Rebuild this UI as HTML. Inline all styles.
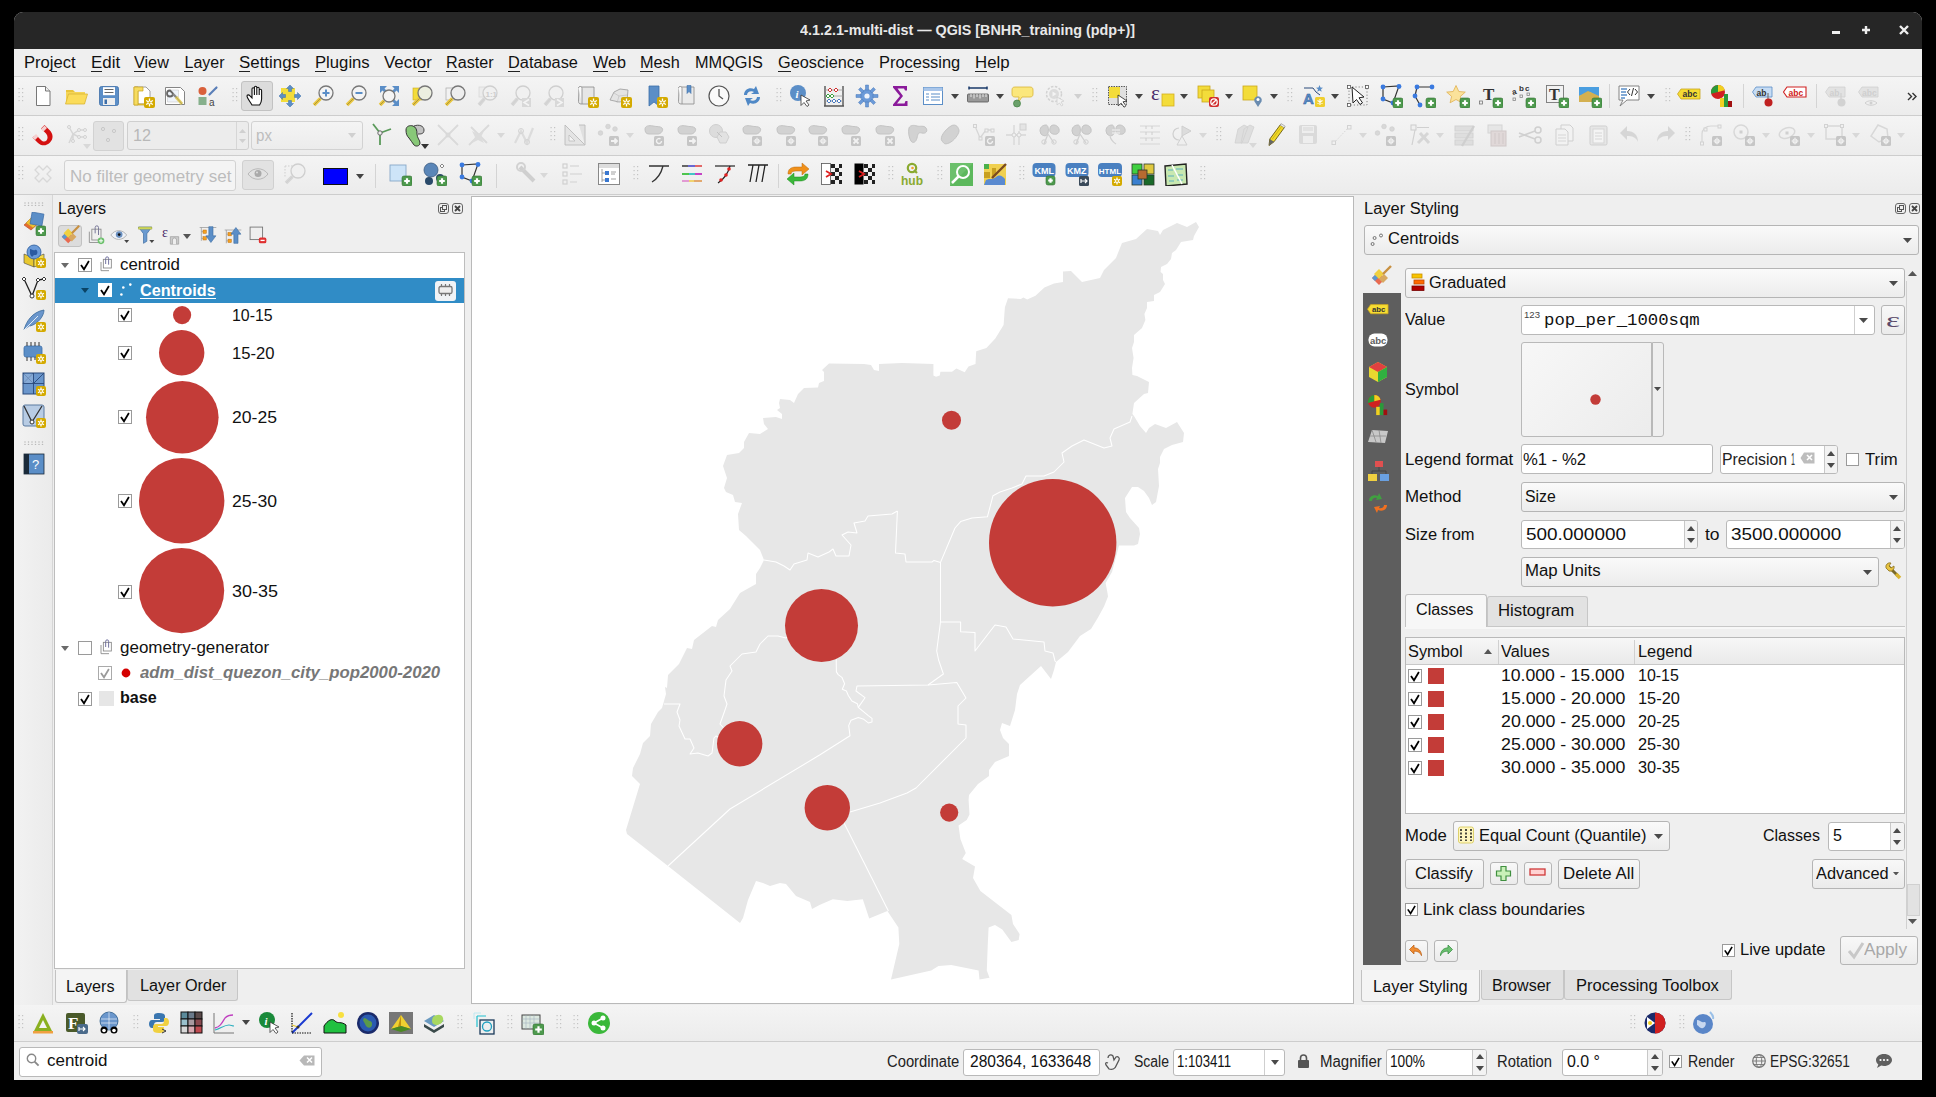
<!DOCTYPE html><html><head><meta charset="utf-8"><style>
html,body{margin:0;padding:0;}
body{width:1936px;height:1097px;background:#000;position:relative;overflow:hidden;font-family:"Liberation Sans",sans-serif;}
body>div,body>svg{position:absolute;}
.t{white-space:nowrap;}
</style></head><body>
<div style="left:14px;top:12px;width:1908px;height:1068px;background:#efefef;border-radius:9px 9px 0 0;overflow:hidden"></div>
<div style="left:14px;top:12px;width:1908px;height:37px;background:#262626;border-radius:9px 9px 0 0"></div>
<div class="t" style="left:800.0px;top:21.8px;font-size:15px;line-height:15px;color:#e8e8e8;font-weight:bold;font-style:normal;font-family:'Liberation Sans';transform:scaleX(0.9561);transform-origin:0 0;">4.1.2.1-multi-dist — QGIS [BNHR_training (pdp+)]</div>
<svg style="left:1826px;top:20px;" width="100" height="22" viewBox="0 0 100 22"><rect x="6" y="11" width="8" height="3" fill="#eee"/><path d="M40 6v8M36 10h8" stroke="#eee" stroke-width="2.4"/><path d="M74 6l8 8M82 6l-8 8" stroke="#eee" stroke-width="2.4"/></svg>
<div style="left:14px;top:49px;width:1908px;height:27px;background:#efefef"></div>
<div style="left:14px;top:76px;width:1908px;height:1px;background:#d2d2d2"></div>
<div class="t" style="left:24.3px;top:55.0px;font-size:16px;line-height:16px;color:#111;font-weight:normal;font-style:normal;font-family:'Liberation Sans';transform:scaleX(1.0390);transform-origin:0 0;">Project</div>
<div style="left:51px;top:71px;width:6px;height:1px;background:#222"></div>
<div class="t" style="left:90.7px;top:55.0px;font-size:16px;line-height:16px;color:#111;font-weight:normal;font-style:normal;font-family:'Liberation Sans';transform:scaleX(1.0549);transform-origin:0 0;">Edit</div>
<div style="left:91px;top:71px;width:11px;height:1px;background:#222"></div>
<div class="t" style="left:134.0px;top:55.0px;font-size:16px;line-height:16px;color:#111;font-weight:normal;font-style:normal;font-family:'Liberation Sans';transform:scaleX(1.0127);transform-origin:0 0;">View</div>
<div style="left:134px;top:71px;width:11px;height:1px;background:#222"></div>
<div class="t" style="left:184.5px;top:55.0px;font-size:16px;line-height:16px;color:#111;font-weight:normal;font-style:normal;font-family:'Liberation Sans';transform:scaleX(1.0000);transform-origin:0 0;">Layer</div>
<div style="left:184px;top:71px;width:9px;height:1px;background:#222"></div>
<div class="t" style="left:239.2px;top:55.0px;font-size:16px;line-height:16px;color:#111;font-weight:normal;font-style:normal;font-family:'Liberation Sans';transform:scaleX(1.0561);transform-origin:0 0;">Settings</div>
<div style="left:239px;top:71px;width:11px;height:1px;background:#222"></div>
<div class="t" style="left:314.9px;top:55.0px;font-size:16px;line-height:16px;color:#111;font-weight:normal;font-style:normal;font-family:'Liberation Sans';transform:scaleX(1.0423);transform-origin:0 0;">Plugins</div>
<div style="left:315px;top:71px;width:11px;height:1px;background:#222"></div>
<div class="t" style="left:383.8px;top:55.0px;font-size:16px;line-height:16px;color:#111;font-weight:normal;font-style:normal;font-family:'Liberation Sans';transform:scaleX(1.0557);transform-origin:0 0;">Vector</div>
<div style="left:418px;top:71px;width:9px;height:1px;background:#222"></div>
<div class="t" style="left:446.0px;top:55.0px;font-size:16px;line-height:16px;color:#111;font-weight:normal;font-style:normal;font-family:'Liberation Sans';transform:scaleX(1.0085);transform-origin:0 0;">Raster</div>
<div style="left:446px;top:71px;width:12px;height:1px;background:#222"></div>
<div class="t" style="left:508.0px;top:55.0px;font-size:16px;line-height:16px;color:#111;font-weight:normal;font-style:normal;font-family:'Liberation Sans';transform:scaleX(1.0207);transform-origin:0 0;">Database</div>
<div style="left:508px;top:71px;width:12px;height:1px;background:#222"></div>
<div class="t" style="left:592.7px;top:55.0px;font-size:16px;line-height:16px;color:#111;font-weight:normal;font-style:normal;font-family:'Liberation Sans';transform:scaleX(1.0110);transform-origin:0 0;">Web</div>
<div style="left:593px;top:71px;width:15px;height:1px;background:#222"></div>
<div class="t" style="left:640.2px;top:55.0px;font-size:16px;line-height:16px;color:#111;font-weight:normal;font-style:normal;font-family:'Liberation Sans';transform:scaleX(1.0153);transform-origin:0 0;">Mesh</div>
<div style="left:640px;top:71px;width:13px;height:1px;background:#222"></div>
<div class="t" style="left:695.3px;top:55.0px;font-size:16px;line-height:16px;color:#111;font-weight:normal;font-style:normal;font-family:'Liberation Sans';transform:scaleX(1.0177);transform-origin:0 0;">MMQGIS</div>
<div class="t" style="left:778.0px;top:55.0px;font-size:16px;line-height:16px;color:#111;font-weight:normal;font-style:normal;font-family:'Liberation Sans';transform:scaleX(1.0180);transform-origin:0 0;">Geoscience</div>
<div style="left:778px;top:71px;width:13px;height:1px;background:#222"></div>
<div class="t" style="left:878.7px;top:55.0px;font-size:16px;line-height:16px;color:#111;font-weight:normal;font-style:normal;font-family:'Liberation Sans';transform:scaleX(1.0265);transform-origin:0 0;">Processing</div>
<div style="left:905px;top:71px;width:8px;height:1px;background:#222"></div>
<div class="t" style="left:974.9px;top:55.0px;font-size:16px;line-height:16px;color:#111;font-weight:normal;font-style:normal;font-family:'Liberation Sans';transform:scaleX(1.0498);transform-origin:0 0;">Help</div>
<div style="left:975px;top:71px;width:12px;height:1px;background:#222"></div>
<div style="left:14px;top:77px;width:1908px;height:38px;background:linear-gradient(#f4f4f4,#ececec)"></div>
<div style="left:14px;top:115px;width:1908px;height:1px;background:#cdcdcd"></div>
<div style="left:14px;top:116px;width:1908px;height:39px;background:linear-gradient(#f4f4f4,#ececec)"></div>
<div style="left:14px;top:155px;width:1908px;height:1px;background:#cdcdcd"></div>
<div style="left:14px;top:156px;width:1908px;height:38px;background:linear-gradient(#f4f4f4,#ececec)"></div>
<div style="left:14px;top:194px;width:1908px;height:1px;background:#cdcdcd"></div>
<div style="left:14px;top:195px;width:1908px;height:810px;background:#efefef"></div>
<div style="left:14px;top:195px;width:38px;height:810px;background:linear-gradient(90deg,#f2f2f2,#ebebeb)"></div>
<div style="left:52px;top:195px;width:1px;height:810px;background:#d6d6d6"></div>
<div class="t" style="left:58.0px;top:200.5px;font-size:16px;line-height:16px;color:#111;font-weight:normal;font-style:normal;font-family:'Liberation Sans';transform:scaleX(1.0000);transform-origin:0 0;">Layers</div>
<div style="left:438px;top:203px;width:11px;height:11px;border:1px solid #666;border-radius:3px;box-sizing:border-box"></div>
<div style="left:452px;top:203px;width:11px;height:11px;border:1px solid #666;border-radius:3px;box-sizing:border-box"></div>
<svg style="left:438px;top:203px;" width="26" height="11" viewBox="0 0 26 11"><rect x="2.5" y="4.5" width="4" height="4" fill="none" stroke="#555" stroke-width="1"/><rect x="4.5" y="2.5" width="4" height="4" fill="#efefef" stroke="#555" stroke-width="1"/><path d="M17 3l5 5M22 3l-5 5" stroke="#444" stroke-width="1.8"/></svg>
<div style="left:54px;top:252px;width:411px;height:717px;background:#fff;border:1px solid #bdbdbd;box-sizing:border-box"></div>
<div style="left:55px;top:278px;width:409px;height:25px;background:#308cc6"></div>
<div style="left:471px;top:196px;width:883px;height:808px;background:#fff;border:1px solid #b9b9b9;box-sizing:border-box"></div>
<div class="t" style="left:1364.0px;top:201.3px;font-size:16px;line-height:16px;color:#111;font-weight:normal;font-style:normal;font-family:'Liberation Sans';transform:scaleX(1.0272);transform-origin:0 0;">Layer Styling</div>
<div style="left:14px;top:1005px;width:1908px;height:36px;background:linear-gradient(#f4f4f4,#ececec)"></div>
<div style="left:14px;top:1041px;width:1908px;height:1px;background:#cdcdcd"></div>
<div style="left:14px;top:1042px;width:1908px;height:38px;background:#efefef"></div>
<div style="left:58px;top:225px;width:24px;height:22px;background:#dcdcdc;border:1px solid #c2c2c2;border-radius:3px;box-sizing:border-box"></div>
<svg style="left:61.0px;top:262.7px;" width="8" height="5" viewBox="0 0 8 5"><path d="M0 0H8L4.0 5Z" fill="#6a6a6a"/></svg>
<svg style="left:78px;top:258px;" width="14" height="14" viewBox="0 0 14 14"><rect x="0.5" y="0.5" width="13" height="13" fill="#fff" stroke="#9a9a9a"/><path d="M3.0 6.9 L6.0 11.3 L10.9 3.0" fill="none" stroke="#000" stroke-width="1.75" stroke-linejoin="miter"/></svg>
<div class="t" style="left:120.0px;top:257.1px;font-size:16px;line-height:16px;color:#111;font-weight:normal;font-style:normal;font-family:'Liberation Sans';transform:scaleX(1.0534);transform-origin:0 0;">centroid</div>
<svg style="left:81.0px;top:288.0px;" width="8" height="5" viewBox="0 0 8 5"><path d="M0 0H8L4.0 5Z" fill="#0b4466"/></svg>
<svg style="left:98px;top:283px;" width="14" height="14" viewBox="0 0 14 14"><rect x="0.5" y="0.5" width="13" height="13" fill="#fff" stroke="#fff"/><path d="M3.0 6.9 L6.0 11.3 L10.9 3.0" fill="none" stroke="#000" stroke-width="1.75" stroke-linejoin="miter"/></svg>
<svg style="left:118px;top:282px;" width="16" height="16" viewBox="0 0 16 16"><circle cx="3.4" cy="12.5" r="1.3" fill="#fff"/><circle cx="5.3" cy="5.5" r="1.3" fill="#fff"/><circle cx="12.3" cy="2.6" r="1.3" fill="#fff"/></svg>
<div class="t" style="left:140.0px;top:282.5px;font-size:16px;line-height:16px;color:#fff;font-weight:bold;font-style:normal;font-family:'Liberation Sans';transform:scaleX(1.0131);transform-origin:0 0;">Centroids</div>
<div style="left:140px;top:298px;width:76px;height:1px;background:#fff"></div>
<div style="left:435px;top:280.5px;width:21px;height:20px;background:#f0f3f6;border-radius:3px"></div>
<svg style="left:437px;top:283px;" width="17" height="14" viewBox="0 0 17 14"><rect x="2" y="3.5" width="13" height="7" rx="1.5" fill="#eee" stroke="#777" stroke-width="1.3"/><path d="M4.5 1v2.5M8.5 1v2.5M12.5 1v2.5M4.5 10.5v2.5M8.5 10.5v2.5M12.5 10.5v2.5" stroke="#777" stroke-width="1.2"/></svg>
<svg style="left:118px;top:308px;" width="14" height="14" viewBox="0 0 14 14"><rect x="0.5" y="0.5" width="13" height="13" fill="#fff" stroke="#9a9a9a"/><path d="M3.0 6.9 L6.0 11.3 L10.9 3.0" fill="none" stroke="#000" stroke-width="1.75" stroke-linejoin="miter"/></svg>
<svg style="left:171.8px;top:304.59999999999997px;" width="20.2" height="20.2" viewBox="0 0 20.2 20.2"><circle cx="10.1" cy="10.1" r="9.1" fill="#c33c38"/></svg>
<div class="t" style="left:232.0px;top:307.5px;font-size:16px;line-height:16px;color:#111;font-weight:normal;font-style:normal;font-family:'Liberation Sans';transform:scaleX(0.9937);transform-origin:0 0;">10-15</div>
<svg style="left:118px;top:346px;" width="14" height="14" viewBox="0 0 14 14"><rect x="0.5" y="0.5" width="13" height="13" fill="#fff" stroke="#9a9a9a"/><path d="M3.0 6.9 L6.0 11.3 L10.9 3.0" fill="none" stroke="#000" stroke-width="1.75" stroke-linejoin="miter"/></svg>
<svg style="left:158.20000000000002px;top:329.3px;" width="47.4" height="47.4" viewBox="0 0 47.4 47.4"><circle cx="23.7" cy="23.7" r="22.7" fill="#c33c38"/></svg>
<div class="t" style="left:232.0px;top:345.8px;font-size:16px;line-height:16px;color:#111;font-weight:normal;font-style:normal;font-family:'Liberation Sans';transform:scaleX(1.0376);transform-origin:0 0;">15-20</div>
<svg style="left:118px;top:410px;" width="14" height="14" viewBox="0 0 14 14"><rect x="0.5" y="0.5" width="13" height="13" fill="#fff" stroke="#9a9a9a"/><path d="M3.0 6.9 L6.0 11.3 L10.9 3.0" fill="none" stroke="#000" stroke-width="1.75" stroke-linejoin="miter"/></svg>
<svg style="left:144.60000000000002px;top:379.59999999999997px;" width="74.6" height="74.6" viewBox="0 0 74.6 74.6"><circle cx="37.3" cy="37.3" r="36.3" fill="#c33c38"/></svg>
<div class="t" style="left:232.0px;top:410.1px;font-size:16px;line-height:16px;color:#111;font-weight:normal;font-style:normal;font-family:'Liberation Sans';transform:scaleX(1.0986);transform-origin:0 0;">20-25</div>
<svg style="left:118px;top:494px;" width="14" height="14" viewBox="0 0 14 14"><rect x="0.5" y="0.5" width="13" height="13" fill="#fff" stroke="#9a9a9a"/><path d="M3.0 6.9 L6.0 11.3 L10.9 3.0" fill="none" stroke="#000" stroke-width="1.75" stroke-linejoin="miter"/></svg>
<svg style="left:137.89999999999998px;top:457.1px;" width="87.4" height="87.4" viewBox="0 0 87.4 87.4"><circle cx="43.7" cy="43.7" r="42.7" fill="#c33c38"/></svg>
<div class="t" style="left:232.0px;top:493.5px;font-size:16px;line-height:16px;color:#111;font-weight:normal;font-style:normal;font-family:'Liberation Sans';transform:scaleX(1.0986);transform-origin:0 0;">25-30</div>
<svg style="left:118px;top:585px;" width="14" height="14" viewBox="0 0 14 14"><rect x="0.5" y="0.5" width="13" height="13" fill="#fff" stroke="#9a9a9a"/><path d="M3.0 6.9 L6.0 11.3 L10.9 3.0" fill="none" stroke="#000" stroke-width="1.75" stroke-linejoin="miter"/></svg>
<svg style="left:138.0px;top:547.4px;" width="87.2" height="87.2" viewBox="0 0 87.2 87.2"><circle cx="43.6" cy="43.6" r="42.6" fill="#c33c38"/></svg>
<div class="t" style="left:232.0px;top:584.0px;font-size:16px;line-height:16px;color:#111;font-weight:normal;font-style:normal;font-family:'Liberation Sans';transform:scaleX(1.1230);transform-origin:0 0;">30-35</div>
<svg style="left:61.0px;top:646.2px;" width="8" height="5" viewBox="0 0 8 5"><path d="M0 0H8L4.0 5Z" fill="#6a6a6a"/></svg>
<svg style="left:78px;top:641px;" width="14" height="14" viewBox="0 0 14 14"><rect x="0.5" y="0.5" width="13" height="13" fill="#fff" stroke="#9a9a9a"/></svg>
<div class="t" style="left:120.0px;top:640.3px;font-size:16px;line-height:16px;color:#111;font-weight:normal;font-style:normal;font-family:'Liberation Sans';transform:scaleX(1.0606);transform-origin:0 0;">geometry-generator</div>
<svg style="left:98px;top:666px;" width="14" height="14" viewBox="0 0 14 14"><rect x="0.5" y="0.5" width="13" height="13" fill="#fff" stroke="#aaa"/><path d="M3.0 6.9 L6.0 11.3 L10.9 3.0" fill="none" stroke="#9a9a9a" stroke-width="1.75" stroke-linejoin="miter"/></svg>
<svg style="left:121px;top:668px;" width="10" height="10" viewBox="0 0 10 10"><circle cx="5" cy="5" r="4.4" fill="#d40000"/></svg>
<div class="t" style="left:140.0px;top:664.5px;font-size:16px;line-height:16px;color:#777;font-weight:bold;font-style:italic;font-family:'Liberation Sans';transform:scaleX(1.0481);transform-origin:0 0;">adm_dist_quezon_city_pop2000-2020</div>
<svg style="left:78px;top:691.5px;" width="14" height="14" viewBox="0 0 14 14"><rect x="0.5" y="0.5" width="13" height="13" fill="#fff" stroke="#9a9a9a"/><path d="M3.0 6.9 L6.0 11.3 L10.9 3.0" fill="none" stroke="#000" stroke-width="1.75" stroke-linejoin="miter"/></svg>
<div style="left:99px;top:690.5px;width:15px;height:15px;background:#e6e6e6"></div>
<div class="t" style="left:120.0px;top:689.9px;font-size:16px;line-height:16px;color:#111;font-weight:bold;font-style:normal;font-family:'Liberation Sans';transform:scaleX(1.0060);transform-origin:0 0;">base</div>
<div style="left:55px;top:970px;width:72px;height:33px;background:#f4f4f4;border:1px solid #c2c2c2;border-top:none;border-radius:0 0 3px 3px;box-sizing:border-box"></div>
<div style="left:127px;top:970px;width:111px;height:31px;background:#e1e1e1;border:1px solid #c6c6c6;border-top:none;border-radius:0 0 3px 3px;box-sizing:border-box"></div>
<div class="t" style="left:66.0px;top:979.0px;font-size:16px;line-height:16px;color:#111;font-weight:normal;font-style:normal;font-family:'Liberation Sans';transform:scaleX(1.0104);transform-origin:0 0;">Layers</div>
<div class="t" style="left:140.0px;top:978.0px;font-size:16px;line-height:16px;color:#111;font-weight:normal;font-style:normal;font-family:'Liberation Sans';transform:scaleX(1.0124);transform-origin:0 0;">Layer Order</div>
<div style="left:1895px;top:203px;width:11px;height:11px;border:1px solid #666;border-radius:3px;box-sizing:border-box"></div>
<div style="left:1909px;top:203px;width:11px;height:11px;border:1px solid #666;border-radius:3px;box-sizing:border-box"></div>
<svg style="left:1895px;top:203px;" width="26" height="11" viewBox="0 0 26 11"><rect x="2.5" y="4.5" width="4" height="4" fill="none" stroke="#555" stroke-width="1"/><rect x="4.5" y="2.5" width="4" height="4" fill="#efefef" stroke="#555" stroke-width="1"/><path d="M17 3l5 5M22 3l-5 5" stroke="#444" stroke-width="1.8"/></svg>
<div style="left:1363.5px;top:224.5px;width:555.0px;height:30.0px;background:linear-gradient(#fafafa,#ececec);border:1px solid #b5b5b5;border-radius:3px;box-sizing:border-box"></div>
<svg style="left:1902.5px;top:237.5px;" width="9" height="5" viewBox="0 0 9 5"><path d="M0 0H9L4.5 5Z" fill="#4a4a4a"/></svg>
<svg style="left:1369px;top:232px;" width="16" height="16" viewBox="0 0 16 16"><circle cx="3.6" cy="12" r="1.5" fill="none" stroke="#666" stroke-width="0.9"/><circle cx="5.6" cy="6" r="1.5" fill="none" stroke="#666" stroke-width="0.9"/><circle cx="12" cy="3.5" r="1.5" fill="none" stroke="#666" stroke-width="0.9"/></svg>
<div class="t" style="left:1388.0px;top:231.0px;font-size:16px;line-height:16px;color:#111;font-weight:normal;font-style:normal;font-family:'Liberation Sans';transform:scaleX(1.0368);transform-origin:0 0;">Centroids</div>
<div style="left:1363px;top:293px;width:38px;height:672px;background:#5e5e5e"></div>
<div style="left:1905.5px;top:268px;width:14px;height:661px;background:#efefef"></div>
<div style="left:1905.5px;top:281px;width:1px;height:648px;background:#d0d0d0"></div>
<svg style="left:1907.8px;top:271.0px;" width="9" height="5" viewBox="0 0 9 5"><path d="M0 5H9L4.5 0Z" fill="#555"/></svg>
<svg style="left:1907.8px;top:919.0px;" width="9" height="5" viewBox="0 0 9 5"><path d="M0 0H9L4.5 5Z" fill="#555"/></svg>
<div style="left:1906.5px;top:883.5px;width:13px;height:32px;background:#e2e2e2;border:1px solid #d0d0d0;box-sizing:border-box"></div>
<div style="left:1404.5px;top:267.5px;width:500.0px;height:30.0px;background:linear-gradient(#fafafa,#ececec);border:1px solid #b5b5b5;border-radius:3px;box-sizing:border-box"></div>
<svg style="left:1888.5px;top:280.5px;" width="9" height="5" viewBox="0 0 9 5"><path d="M0 0H9L4.5 5Z" fill="#4a4a4a"/></svg>
<svg style="left:1411px;top:273px;" width="14" height="19" viewBox="0 0 14 19"><rect x="1" y="1" width="10" height="4" fill="#f8c400" stroke="#c99100" stroke-width="0.8"/><rect x="3" y="7" width="10" height="4" fill="#ff6a00" stroke="#c04a00" stroke-width="0.8"/><rect x="1" y="13" width="12" height="4.5" fill="#b00000" stroke="#700" stroke-width="0.8"/></svg>
<div class="t" style="left:1429.3px;top:274.9px;font-size:16px;line-height:16px;color:#111;font-weight:normal;font-style:normal;font-family:'Liberation Sans';transform:scaleX(1.0201);transform-origin:0 0;">Graduated</div>
<div class="t" style="left:1404.5px;top:312.1px;font-size:16px;line-height:16px;color:#111;font-weight:normal;font-style:normal;font-family:'Liberation Sans';transform:scaleX(1.0131);transform-origin:0 0;">Value</div>
<div style="left:1520.5px;top:304.5px;width:354.0px;height:30.0px;background:#fff;border:1px solid #b9b9b9;border-radius:3px;box-sizing:border-box"></div>
<div style="left:1854px;top:305.5px;width:1px;height:28px;background:#cfcfcf"></div>
<svg style="left:1859.0px;top:317.5px;" width="9" height="5" viewBox="0 0 9 5"><path d="M0 0H9L4.5 5Z" fill="#4a4a4a"/></svg>
<div class="t" style="left:1524.0px;top:311.4px;font-size:9px;line-height:9px;color:#444;font-weight:normal;font-style:normal;font-family:'Liberation Sans';transform:scaleX(1.0645);transform-origin:0 0;">123</div>
<div class="t" style="left:1544.3px;top:312.4px;font-size:17px;line-height:17px;color:#111;font-weight:normal;font-style:normal;font-family:'Liberation Mono';transform:scaleX(1.0176);transform-origin:0 0;">pop_per_1000sqm</div>
<div style="left:1881px;top:304.5px;width:23.5px;height:30.0px;background:linear-gradient(#f8f8f8,#ebebeb);border:1px solid #b5b5b5;border-radius:3px;box-sizing:border-box"></div>
<div class="t" style="left:1886.0px;top:310.1px;font-size:20px;line-height:20px;color:#5a4a6a;font-weight:normal;font-style:normal;font-family:'Liberation Serif';transform:scaleX(1.6667);transform-origin:0 0;">ε</div>
<div class="t" style="left:1404.5px;top:382.3px;font-size:16px;line-height:16px;color:#111;font-weight:normal;font-style:normal;font-family:'Liberation Sans';transform:scaleX(1.0116);transform-origin:0 0;">Symbol</div>
<div style="left:1520.5px;top:341.5px;width:131.5px;height:95px;background:linear-gradient(135deg,#f7f7f7,#ececec);border:1px solid #b9b9b9;border-radius:3px 0 0 3px;box-sizing:border-box"></div>
<div style="left:1652px;top:341.5px;width:11.5px;height:95px;background:#efefef;border:1px solid #b9b9b9;border-radius:0 3px 3px 0;box-sizing:border-box"></div>
<svg style="left:1654.3px;top:387.0px;" width="7" height="4" viewBox="0 0 7 4"><path d="M0 0H7L3.5 4Z" fill="#4a4a4a"/></svg>
<svg style="left:1590px;top:393.5px;" width="11" height="11" viewBox="0 0 11 11"><circle cx="5.5" cy="5.5" r="5.2" fill="#c33c38"/></svg>
<div class="t" style="left:1404.5px;top:452.2px;font-size:16px;line-height:16px;color:#111;font-weight:normal;font-style:normal;font-family:'Liberation Sans';transform:scaleX(1.0494);transform-origin:0 0;">Legend format</div>
<div style="left:1520.5px;top:443.5px;width:192.5px;height:30.0px;background:#fff;border:1px solid #b9b9b9;border-radius:3px;box-sizing:border-box"></div>
<div class="t" style="left:1523.0px;top:452.0px;font-size:16px;line-height:16px;color:#111;font-weight:normal;font-style:normal;font-family:'Liberation Sans';transform:scaleX(1.0417);transform-origin:0 0;">%1 - %2</div>
<div style="left:1720px;top:444.5px;width:118px;height:29.0px;background:#fff;border:1px solid #b9b9b9;border-radius:3px;box-sizing:border-box"></div>
<div style="left:1824px;top:445.5px;width:1px;height:27.0px;background:#c8c8c8"></div>
<div style="left:1825px;top:445.5px;width:12px;height:27.0px;background:#f3f3f3;border-radius:0 2px 2px 0"></div>
<svg style="left:1827.0px;top:450.7px;" width="8" height="5" viewBox="0 0 8 5"><path d="M0 5H8L4.0 0Z" fill="#4a4a4a"/></svg>
<svg style="left:1827.0px;top:462.88px;" width="8" height="5" viewBox="0 0 8 5"><path d="M0 0H8L4.0 5Z" fill="#4a4a4a"/></svg>
<div class="t" style="left:1722.0px;top:452.2px;font-size:16px;line-height:16px;color:#222;font-weight:normal;font-style:normal;font-family:'Liberation Sans';transform:scaleX(0.9884);transform-origin:0 0;">Precision</div>
<div class="t" style="left:1791.0px;top:452.2px;font-size:16px;line-height:16px;color:#333;font-weight:normal;font-style:normal;font-family:'Liberation Sans';transform:scaleX(0.4464);transform-origin:0 0;">1</div>
<svg style="left:1800px;top:452px;" width="15" height="12" viewBox="0 0 15 12"><path d="M4 0.5H14.5V11.5H4L0.5 6Z" fill="#bdbdbd"/><path d="M7 3l5 5M12 3l-5 5" stroke="#fff" stroke-width="1.6"/></svg>
<svg style="left:1845.5px;top:452.5px;" width="13" height="13" viewBox="0 0 13 13"><rect x="0.5" y="0.5" width="12" height="12" fill="#fff" stroke="#9a9a9a"/></svg>
<div class="t" style="left:1864.5px;top:452.2px;font-size:16px;line-height:16px;color:#111;font-weight:normal;font-style:normal;font-family:'Liberation Sans';transform:scaleX(1.0427);transform-origin:0 0;">Trim</div>
<div class="t" style="left:1404.5px;top:489.1px;font-size:16px;line-height:16px;color:#111;font-weight:normal;font-style:normal;font-family:'Liberation Sans';transform:scaleX(1.0573);transform-origin:0 0;">Method</div>
<div style="left:1520.5px;top:481.5px;width:384.0px;height:30.0px;background:linear-gradient(#fafafa,#ececec);border:1px solid #b5b5b5;border-radius:3px;box-sizing:border-box"></div>
<svg style="left:1888.5px;top:494.5px;" width="9" height="5" viewBox="0 0 9 5"><path d="M0 0H9L4.5 5Z" fill="#4a4a4a"/></svg>
<div class="t" style="left:1525.0px;top:489.1px;font-size:16px;line-height:16px;color:#111;font-weight:normal;font-style:normal;font-family:'Liberation Sans';transform:scaleX(0.9872);transform-origin:0 0;">Size</div>
<div class="t" style="left:1404.5px;top:527.0px;font-size:16px;line-height:16px;color:#111;font-weight:normal;font-style:normal;font-family:'Liberation Sans';transform:scaleX(1.0293);transform-origin:0 0;">Size from</div>
<div style="left:1520.5px;top:519.5px;width:177.5px;height:29.0px;background:#fff;border:1px solid #b9b9b9;border-radius:3px;box-sizing:border-box"></div>
<div style="left:1684px;top:520.5px;width:1px;height:27.0px;background:#c8c8c8"></div>
<div style="left:1685px;top:520.5px;width:12px;height:27.0px;background:#f3f3f3;border-radius:0 2px 2px 0"></div>
<svg style="left:1687.0px;top:525.7px;" width="8" height="5" viewBox="0 0 8 5"><path d="M0 5H8L4.0 0Z" fill="#4a4a4a"/></svg>
<svg style="left:1687.0px;top:537.88px;" width="8" height="5" viewBox="0 0 8 5"><path d="M0 0H8L4.0 5Z" fill="#4a4a4a"/></svg>
<div class="t" style="left:1525.5px;top:527.0px;font-size:16px;line-height:16px;color:#111;font-weight:normal;font-style:normal;font-family:'Liberation Sans';transform:scaleX(1.1825);transform-origin:0 0;">500.000000</div>
<div class="t" style="left:1704.7px;top:527.0px;font-size:16px;line-height:16px;color:#111;font-weight:normal;font-style:normal;font-family:'Liberation Sans';transform:scaleX(1.0919);transform-origin:0 0;">to</div>
<div style="left:1726px;top:519.5px;width:178.5px;height:29.0px;background:#fff;border:1px solid #b9b9b9;border-radius:3px;box-sizing:border-box"></div>
<div style="left:1890px;top:520.5px;width:1px;height:27.0px;background:#c8c8c8"></div>
<div style="left:1891px;top:520.5px;width:12.5px;height:27.0px;background:#f3f3f3;border-radius:0 2px 2px 0"></div>
<svg style="left:1893.25px;top:525.7px;" width="8" height="5" viewBox="0 0 8 5"><path d="M0 5H8L4.0 0Z" fill="#4a4a4a"/></svg>
<svg style="left:1893.25px;top:537.88px;" width="8" height="5" viewBox="0 0 8 5"><path d="M0 0H8L4.0 5Z" fill="#4a4a4a"/></svg>
<div class="t" style="left:1730.8px;top:527.0px;font-size:16px;line-height:16px;color:#111;font-weight:normal;font-style:normal;font-family:'Liberation Sans';transform:scaleX(1.1794);transform-origin:0 0;">3500.000000</div>
<div style="left:1520.5px;top:556.5px;width:358.0px;height:30.0px;background:linear-gradient(#fafafa,#ececec);border:1px solid #b5b5b5;border-radius:3px;box-sizing:border-box"></div>
<svg style="left:1862.5px;top:569.5px;" width="9" height="5" viewBox="0 0 9 5"><path d="M0 0H9L4.5 5Z" fill="#4a4a4a"/></svg>
<div class="t" style="left:1525.0px;top:563.3px;font-size:16px;line-height:16px;color:#111;font-weight:normal;font-style:normal;font-family:'Liberation Sans';transform:scaleX(1.0500);transform-origin:0 0;">Map Units</div>
<svg style="left:1884px;top:562px;" width="18" height="18" viewBox="0 0 18 18"><path d="M3 3 L14 14" stroke="#7a6a2a" stroke-width="3"/><path d="M2 6a4 4 0 0 1 5-5l-2 3 2 2 3-2a4 4 0 0 1-5 5z" fill="#e8c440" stroke="#8a7020" stroke-width="0.8"/><path d="M12 12l4 4" stroke="#d9b430" stroke-width="3.5"/></svg>
<div style="left:1404.5px;top:626px;width:500px;height:1px;background:#c7c7c7"></div>
<div style="left:1404.5px;top:593.5px;width:82px;height:34px;background:#f7f7f7;border:1px solid #c2c2c2;border-bottom:none;border-radius:3px 3px 0 0;box-sizing:border-box"></div>
<div style="left:1486.5px;top:596px;width:101px;height:30px;background:#e2e2e2;border:1px solid #c7c7c7;border-bottom:none;border-radius:3px 3px 0 0;box-sizing:border-box"></div>
<div class="t" style="left:1416.0px;top:601.7px;font-size:16px;line-height:16px;color:#111;font-weight:normal;font-style:normal;font-family:'Liberation Sans';transform:scaleX(1.0095);transform-origin:0 0;">Classes</div>
<div class="t" style="left:1498.3px;top:602.5px;font-size:16px;line-height:16px;color:#111;font-weight:normal;font-style:normal;font-family:'Liberation Sans';transform:scaleX(1.0458);transform-origin:0 0;">Histogram</div>
<div style="left:1404.5px;top:626.5px;width:500px;height:2px;background:#f7f7f7"></div>
<div style="left:1404.5px;top:637px;width:500.5px;height:177px;background:#fff;border:1px solid #b9b9b9;box-sizing:border-box"></div>
<div style="left:1405.5px;top:638px;width:498.5px;height:26.5px;background:linear-gradient(#f7f7f7,#eaeaea);border-bottom:1px solid #c8c8c8;box-sizing:border-box"></div>
<div style="left:1498px;top:640px;width:1px;height:24px;background:#d0d0d0"></div>
<div style="left:1634px;top:640px;width:1px;height:24px;background:#d0d0d0"></div>
<div class="t" style="left:1407.5px;top:643.5px;font-size:16px;line-height:16px;color:#111;font-weight:normal;font-style:normal;font-family:'Liberation Sans';transform:scaleX(1.0229);transform-origin:0 0;">Symbol</div>
<svg style="left:1483.7px;top:648.5px;" width="8" height="5" viewBox="0 0 8 5"><path d="M0 5H8L4.0 0Z" fill="#555"/></svg>
<div class="t" style="left:1501.3px;top:643.5px;font-size:16px;line-height:16px;color:#111;font-weight:normal;font-style:normal;font-family:'Liberation Sans';transform:scaleX(1.0172);transform-origin:0 0;">Values</div>
<div class="t" style="left:1637.5px;top:643.5px;font-size:16px;line-height:16px;color:#111;font-weight:normal;font-style:normal;font-family:'Liberation Sans';transform:scaleX(1.0198);transform-origin:0 0;">Legend</div>
<svg style="left:1408px;top:669px;" width="14" height="14" viewBox="0 0 14 14"><rect x="0.5" y="0.5" width="13" height="13" fill="#fff" stroke="#9a9a9a"/><path d="M3.0 6.9 L6.0 11.3 L10.9 3.0" fill="none" stroke="#000" stroke-width="1.75" stroke-linejoin="miter"/></svg>
<div style="left:1428px;top:668px;width:16px;height:16px;background:#c33c38"></div>
<div class="t" style="left:1501.3px;top:668.3px;font-size:16px;line-height:16px;color:#111;font-weight:normal;font-style:normal;font-family:'Liberation Sans';transform:scaleX(1.1011);transform-origin:0 0;">10.000 - 15.000</div>
<div class="t" style="left:1637.5px;top:668.3px;font-size:16px;line-height:16px;color:#111;font-weight:normal;font-style:normal;font-family:'Liberation Sans';transform:scaleX(0.9985);transform-origin:0 0;">10-15</div>
<svg style="left:1408px;top:692px;" width="14" height="14" viewBox="0 0 14 14"><rect x="0.5" y="0.5" width="13" height="13" fill="#fff" stroke="#9a9a9a"/><path d="M3.0 6.9 L6.0 11.3 L10.9 3.0" fill="none" stroke="#000" stroke-width="1.75" stroke-linejoin="miter"/></svg>
<div style="left:1428px;top:691px;width:16px;height:16px;background:#c33c38"></div>
<div class="t" style="left:1501.3px;top:691.3px;font-size:16px;line-height:16px;color:#111;font-weight:normal;font-style:normal;font-family:'Liberation Sans';transform:scaleX(1.1100);transform-origin:0 0;">15.000 - 20.000</div>
<div class="t" style="left:1637.5px;top:691.3px;font-size:16px;line-height:16px;color:#111;font-weight:normal;font-style:normal;font-family:'Liberation Sans';transform:scaleX(1.0229);transform-origin:0 0;">15-20</div>
<svg style="left:1408px;top:715px;" width="14" height="14" viewBox="0 0 14 14"><rect x="0.5" y="0.5" width="13" height="13" fill="#fff" stroke="#9a9a9a"/><path d="M3.0 6.9 L6.0 11.3 L10.9 3.0" fill="none" stroke="#000" stroke-width="1.75" stroke-linejoin="miter"/></svg>
<div style="left:1428px;top:714px;width:16px;height:16px;background:#c33c38"></div>
<div class="t" style="left:1501.3px;top:714.3px;font-size:16px;line-height:16px;color:#111;font-weight:normal;font-style:normal;font-family:'Liberation Sans';transform:scaleX(1.1100);transform-origin:0 0;">20.000 - 25.000</div>
<div class="t" style="left:1637.5px;top:714.3px;font-size:16px;line-height:16px;color:#111;font-weight:normal;font-style:normal;font-family:'Liberation Sans';transform:scaleX(1.0229);transform-origin:0 0;">20-25</div>
<svg style="left:1408px;top:738px;" width="14" height="14" viewBox="0 0 14 14"><rect x="0.5" y="0.5" width="13" height="13" fill="#fff" stroke="#9a9a9a"/><path d="M3.0 6.9 L6.0 11.3 L10.9 3.0" fill="none" stroke="#000" stroke-width="1.75" stroke-linejoin="miter"/></svg>
<div style="left:1428px;top:737px;width:16px;height:16px;background:#c33c38"></div>
<div class="t" style="left:1501.3px;top:737.3px;font-size:16px;line-height:16px;color:#111;font-weight:normal;font-style:normal;font-family:'Liberation Sans';transform:scaleX(1.1100);transform-origin:0 0;">25.000 - 30.000</div>
<div class="t" style="left:1637.5px;top:737.3px;font-size:16px;line-height:16px;color:#111;font-weight:normal;font-style:normal;font-family:'Liberation Sans';transform:scaleX(1.0229);transform-origin:0 0;">25-30</div>
<svg style="left:1408px;top:761px;" width="14" height="14" viewBox="0 0 14 14"><rect x="0.5" y="0.5" width="13" height="13" fill="#fff" stroke="#9a9a9a"/><path d="M3.0 6.9 L6.0 11.3 L10.9 3.0" fill="none" stroke="#000" stroke-width="1.75" stroke-linejoin="miter"/></svg>
<div style="left:1428px;top:760px;width:16px;height:16px;background:#c33c38"></div>
<div class="t" style="left:1501.3px;top:760.3px;font-size:16px;line-height:16px;color:#111;font-weight:normal;font-style:normal;font-family:'Liberation Sans';transform:scaleX(1.1100);transform-origin:0 0;">30.000 - 35.000</div>
<div class="t" style="left:1637.5px;top:760.3px;font-size:16px;line-height:16px;color:#111;font-weight:normal;font-style:normal;font-family:'Liberation Sans';transform:scaleX(1.0229);transform-origin:0 0;">30-35</div>
<div class="t" style="left:1404.5px;top:827.8px;font-size:16px;line-height:16px;color:#111;font-weight:normal;font-style:normal;font-family:'Liberation Sans';transform:scaleX(1.0425);transform-origin:0 0;">Mode</div>
<div style="left:1453px;top:820.5px;width:216.5px;height:30.0px;background:linear-gradient(#fafafa,#ececec);border:1px solid #b5b5b5;border-radius:3px;box-sizing:border-box"></div>
<svg style="left:1653.5px;top:833.5px;" width="9" height="5" viewBox="0 0 9 5"><path d="M0 0H9L4.5 5Z" fill="#4a4a4a"/></svg>
<svg style="left:1458px;top:826px;" width="16" height="18" viewBox="0 0 16 18"><rect x="0.5" y="1" width="15" height="16" rx="2" fill="#fff7c0" stroke="#d6c650" stroke-width="0.8"/><path d="M3 3v12M8 3v12M13 3v12" stroke="#222" stroke-width="1.6" stroke-dasharray="2 1.5"/></svg>
<div class="t" style="left:1478.6px;top:827.8px;font-size:16px;line-height:16px;color:#111;font-weight:normal;font-style:normal;font-family:'Liberation Sans';transform:scaleX(1.0288);transform-origin:0 0;">Equal Count (Quantile)</div>
<div class="t" style="left:1763.0px;top:827.8px;font-size:16px;line-height:16px;color:#111;font-weight:normal;font-style:normal;font-family:'Liberation Sans';transform:scaleX(1.0007);transform-origin:0 0;">Classes</div>
<div style="left:1827.5px;top:821.5px;width:77.0px;height:29.0px;background:#fff;border:1px solid #b9b9b9;border-radius:3px;box-sizing:border-box"></div>
<div style="left:1890px;top:822.5px;width:1px;height:27.0px;background:#c8c8c8"></div>
<div style="left:1891px;top:822.5px;width:12.5px;height:27.0px;background:#f3f3f3;border-radius:0 2px 2px 0"></div>
<svg style="left:1893.25px;top:827.7px;" width="8" height="5" viewBox="0 0 8 5"><path d="M0 5H8L4.0 0Z" fill="#4a4a4a"/></svg>
<svg style="left:1893.25px;top:839.88px;" width="8" height="5" viewBox="0 0 8 5"><path d="M0 0H8L4.0 5Z" fill="#4a4a4a"/></svg>
<div class="t" style="left:1832.8px;top:827.8px;font-size:16px;line-height:16px;color:#111;font-weight:normal;font-style:normal;font-family:'Liberation Sans';transform:scaleX(1.0045);transform-origin:0 0;">5</div>
<div style="left:1404.5px;top:858.5px;width:79.0px;height:30.0px;background:linear-gradient(#f8f8f8,#ebebeb);border:1px solid #b5b5b5;border-radius:3px;box-sizing:border-box"></div>
<div class="t" style="left:1415.0px;top:865.5px;font-size:16px;line-height:16px;color:#111;font-weight:normal;font-style:normal;font-family:'Liberation Sans';transform:scaleX(1.0286);transform-origin:0 0;">Classify</div>
<div style="left:1490px;top:861.5px;width:27.5px;height:23.0px;background:linear-gradient(#f8f8f8,#ebebeb);border:1px solid #b5b5b5;border-radius:3px;box-sizing:border-box"></div>
<svg style="left:1495px;top:865px;" width="17" height="17" viewBox="0 0 17 17"><path d="M6 1.5h5v4.5h4.5v5H11v4.5H6V11H1.5V6H6Z" fill="#c9f0b8" stroke="#3f8f3f" stroke-width="1.2"/></svg>
<div style="left:1524px;top:861.5px;width:27.5px;height:23.0px;background:linear-gradient(#f8f8f8,#ebebeb);border:1px solid #b5b5b5;border-radius:3px;box-sizing:border-box"></div>
<svg style="left:1529px;top:868px;" width="17" height="10" viewBox="0 0 17 10"><rect x="1" y="1" width="15" height="6" fill="#ffd2d2" stroke="#d03a3a" stroke-width="1.3"/></svg>
<div style="left:1558px;top:858.5px;width:82px;height:30.0px;background:linear-gradient(#f8f8f8,#ebebeb);border:1px solid #b5b5b5;border-radius:3px;box-sizing:border-box"></div>
<div class="t" style="left:1563.4px;top:865.5px;font-size:16px;line-height:16px;color:#111;font-weight:normal;font-style:normal;font-family:'Liberation Sans';transform:scaleX(1.0530);transform-origin:0 0;">Delete All</div>
<div style="left:1812px;top:858.5px;width:92.5px;height:30.0px;background:linear-gradient(#f8f8f8,#ebebeb);border:1px solid #b5b5b5;border-radius:3px;box-sizing:border-box"></div>
<div class="t" style="left:1816.0px;top:865.5px;font-size:16px;line-height:16px;color:#111;font-weight:normal;font-style:normal;font-family:'Liberation Sans';transform:scaleX(1.0211);transform-origin:0 0;">Advanced</div>
<svg style="left:1893.3px;top:871.75px;" width="6" height="3.5" viewBox="0 0 6 3.5"><path d="M0 0H6L3.0 3.5Z" fill="#555"/></svg>
<svg style="left:1404.5px;top:903px;" width="13" height="13" viewBox="0 0 13 13"><rect x="0.5" y="0.5" width="12" height="12" fill="#fff" stroke="#9a9a9a"/><path d="M2.8 6.4 L5.6 10.5 L10.1 2.8" fill="none" stroke="#000" stroke-width="1.62" stroke-linejoin="miter"/></svg>
<div class="t" style="left:1423.2px;top:902.0px;font-size:16px;line-height:16px;color:#111;font-weight:normal;font-style:normal;font-family:'Liberation Sans';transform:scaleX(1.0525);transform-origin:0 0;">Link class boundaries</div>
<div style="left:1404.5px;top:939.5px;width:23.5px;height:22.5px;background:linear-gradient(#f8f8f8,#ebebeb);border:1px solid #b5b5b5;border-radius:3px;box-sizing:border-box"></div>
<svg style="left:1408px;top:944px;" width="16" height="14" viewBox="0 0 16 14"><path d="M6 1L1.5 5.5 6 10V7.2c3.5 0 6 1 7.5 4.5C13.5 7 10.5 4 6 3.8Z" fill="#f08c30" stroke="#b85a10" stroke-width="0.7"/></svg>
<div style="left:1434px;top:939.5px;width:23.5px;height:22.5px;background:linear-gradient(#f8f8f8,#ebebeb);border:1px solid #b5b5b5;border-radius:3px;box-sizing:border-box"></div>
<svg style="left:1438px;top:944px;" width="16" height="14" viewBox="0 0 16 14"><path d="M10 1l4.5 4.5L10 10V7.2c-3.5 0-6 1-7.5 4.5C2.5 7 5.5 4 10 3.8Z" fill="#6cc070" stroke="#2e8b3a" stroke-width="0.7"/></svg>
<svg style="left:1721.5px;top:943.5px;" width="13" height="13" viewBox="0 0 13 13"><rect x="0.5" y="0.5" width="12" height="12" fill="#fff" stroke="#9a9a9a"/><path d="M2.8 6.4 L5.6 10.5 L10.1 2.8" fill="none" stroke="#000" stroke-width="1.62" stroke-linejoin="miter"/></svg>
<div class="t" style="left:1740.4px;top:942.2px;font-size:16px;line-height:16px;color:#111;font-weight:normal;font-style:normal;font-family:'Liberation Sans';transform:scaleX(1.0324);transform-origin:0 0;">Live update</div>
<div style="left:1839.5px;top:935.5px;width:78.5px;height:29.5px;background:linear-gradient(#f8f8f8,#ebebeb);border:1px solid #b5b5b5;border-radius:3px;box-sizing:border-box"></div>
<svg style="left:1846px;top:940px;" width="20" height="20" viewBox="0 0 20 20"><path d="M3 11 L8 17 L17 3" fill="none" stroke="#c8c8c8" stroke-width="3"/></svg>
<div class="t" style="left:1864.0px;top:942.2px;font-size:16px;line-height:16px;color:#a8a8a8;font-weight:normal;font-style:normal;font-family:'Liberation Sans';transform:scaleX(1.0750);transform-origin:0 0;">Apply</div>
<div style="left:1361px;top:970px;width:119px;height:32px;background:#f4f4f4;border:1px solid #c2c2c2;border-top:none;border-radius:0 0 3px 3px;box-sizing:border-box"></div>
<div style="left:1480.5px;top:970px;width:83.5px;height:30px;background:#e1e1e1;border:1px solid #c6c6c6;border-top:none;border-radius:0 0 3px 3px;box-sizing:border-box"></div>
<div style="left:1564px;top:970px;width:167.5px;height:30px;background:#e1e1e1;border:1px solid #c6c6c6;border-top:none;border-radius:0 0 3px 3px;box-sizing:border-box"></div>
<div class="t" style="left:1372.7px;top:978.5px;font-size:16px;line-height:16px;color:#111;font-weight:normal;font-style:normal;font-family:'Liberation Sans';transform:scaleX(1.0240);transform-origin:0 0;">Layer Styling</div>
<div class="t" style="left:1492.3px;top:978.0px;font-size:16px;line-height:16px;color:#111;font-weight:normal;font-style:normal;font-family:'Liberation Sans';transform:scaleX(1.0048);transform-origin:0 0;">Browser</div>
<div class="t" style="left:1576.4px;top:978.0px;font-size:16px;line-height:16px;color:#111;font-weight:normal;font-style:normal;font-family:'Liberation Sans';transform:scaleX(1.0318);transform-origin:0 0;">Processing Toolbox</div>
<div style="left:18.5px;top:1046.5px;width:303.0px;height:30.0px;background:#fff;border:1px solid #b9b9b9;border-radius:3px;box-sizing:border-box"></div>
<svg style="left:26px;top:1053px;" width="14" height="14" viewBox="0 0 14 14"><circle cx="5.5" cy="5.5" r="4.2" fill="none" stroke="#888" stroke-width="1.4"/><path d="M8.6 8.6l4 4" stroke="#888" stroke-width="1.8"/></svg>
<div class="t" style="left:47.0px;top:1052.9px;font-size:16px;line-height:16px;color:#111;font-weight:normal;font-style:normal;font-family:'Liberation Sans';transform:scaleX(1.0604);transform-origin:0 0;">centroid</div>
<svg style="left:299px;top:1055px;" width="16" height="11" viewBox="0 0 16 11"><path d="M5 0.5H15.5V10.5H5L0.5 5.5Z" fill="#b8b8b8"/><path d="M8 2.5l5 5M13 2.5l-5 5" stroke="#fff" stroke-width="1.5"/></svg>
<div class="t" style="left:886.7px;top:1054.3px;font-size:16px;line-height:16px;color:#222;font-weight:normal;font-style:normal;font-family:'Liberation Sans';transform:scaleX(0.9241);transform-origin:0 0;">Coordinate</div>
<div style="left:962.5px;top:1048.5px;width:137.5px;height:27.5px;background:#fff;border:1px solid #b9b9b9;border-radius:3px;box-sizing:border-box"></div>
<div class="t" style="left:970.0px;top:1054.3px;font-size:16px;line-height:16px;color:#111;font-weight:normal;font-style:normal;font-family:'Liberation Sans';transform:scaleX(0.9720);transform-origin:0 0;">280364, 1633648</div>
<svg style="left:1104px;top:1052px;" width="18" height="20" viewBox="0 0 18 20"><path d="M4 6c0-3 3-4 5-2l1 4 2-3c2-1 4 1 3 3l-3 6c-1 3-4 4-7 3l-3-4c-1-2 0-3 2-2" fill="none" stroke="#555" stroke-width="1.3"/></svg>
<div class="t" style="left:1134.0px;top:1054.3px;font-size:16px;line-height:16px;color:#222;font-weight:normal;font-style:normal;font-family:'Liberation Sans';transform:scaleX(0.8750);transform-origin:0 0;">Scale</div>
<div style="left:1173px;top:1048.5px;width:112px;height:27.5px;background:#fff;border:1px solid #b9b9b9;border-radius:3px;box-sizing:border-box"></div>
<div style="left:1264px;top:1049.5px;width:1px;height:25.5px;background:#cfcfcf"></div>
<svg style="left:1270.5px;top:1060.0px;" width="8" height="5" viewBox="0 0 8 5"><path d="M0 0H8L4.0 5Z" fill="#4a4a4a"/></svg>
<div class="t" style="left:1177.0px;top:1054.3px;font-size:16px;line-height:16px;color:#111;font-weight:normal;font-style:normal;font-family:'Liberation Sans';transform:scaleX(0.8232);transform-origin:0 0;">1:103411</div>
<svg style="left:1297px;top:1054px;" width="13" height="15" viewBox="0 0 13 15"><rect x="1" y="6" width="11" height="8" rx="1" fill="#555"/><path d="M3.5 6V4a3 3 0 0 1 6 0v2" fill="none" stroke="#555" stroke-width="1.6"/></svg>
<div class="t" style="left:1319.7px;top:1054.3px;font-size:16px;line-height:16px;color:#222;font-weight:normal;font-style:normal;font-family:'Liberation Sans';transform:scaleX(0.9383);transform-origin:0 0;">Magnifier</div>
<div style="left:1385.5px;top:1048.5px;width:101.5px;height:27.5px;background:#fff;border:1px solid #b9b9b9;border-radius:3px;box-sizing:border-box"></div>
<div style="left:1472px;top:1049.5px;width:1px;height:25.5px;background:#c8c8c8"></div>
<div style="left:1473px;top:1049.5px;width:13px;height:25.5px;background:#f3f3f3;border-radius:0 2px 2px 0"></div>
<svg style="left:1475.5px;top:1054.25px;" width="8" height="5" viewBox="0 0 8 5"><path d="M0 5H8L4.0 0Z" fill="#4a4a4a"/></svg>
<svg style="left:1475.5px;top:1065.8px;" width="8" height="5" viewBox="0 0 8 5"><path d="M0 0H8L4.0 5Z" fill="#4a4a4a"/></svg>
<div class="t" style="left:1390.0px;top:1054.3px;font-size:16px;line-height:16px;color:#111;font-weight:normal;font-style:normal;font-family:'Liberation Sans';transform:scaleX(0.8545);transform-origin:0 0;">100%</div>
<div class="t" style="left:1497.0px;top:1054.3px;font-size:16px;line-height:16px;color:#222;font-weight:normal;font-style:normal;font-family:'Liberation Sans';transform:scaleX(0.9241);transform-origin:0 0;">Rotation</div>
<div style="left:1561.5px;top:1048.5px;width:101.0px;height:27.5px;background:#fff;border:1px solid #b9b9b9;border-radius:3px;box-sizing:border-box"></div>
<div style="left:1647px;top:1049.5px;width:1px;height:25.5px;background:#c8c8c8"></div>
<div style="left:1648px;top:1049.5px;width:13.5px;height:25.5px;background:#f3f3f3;border-radius:0 2px 2px 0"></div>
<svg style="left:1650.75px;top:1054.25px;" width="8" height="5" viewBox="0 0 8 5"><path d="M0 5H8L4.0 0Z" fill="#4a4a4a"/></svg>
<svg style="left:1650.75px;top:1065.8px;" width="8" height="5" viewBox="0 0 8 5"><path d="M0 0H8L4.0 5Z" fill="#4a4a4a"/></svg>
<div class="t" style="left:1567.0px;top:1054.3px;font-size:16px;line-height:16px;color:#111;font-weight:normal;font-style:normal;font-family:'Liberation Sans';transform:scaleX(0.9964);transform-origin:0 0;">0.0 °</div>
<svg style="left:1669px;top:1055px;" width="13" height="13" viewBox="0 0 13 13"><rect x="0.5" y="0.5" width="12" height="12" fill="#fff" stroke="#9a9a9a"/><path d="M2.8 6.4 L5.6 10.5 L10.1 2.8" fill="none" stroke="#000" stroke-width="1.62" stroke-linejoin="miter"/></svg>
<div class="t" style="left:1688.0px;top:1054.3px;font-size:16px;line-height:16px;color:#222;font-weight:normal;font-style:normal;font-family:'Liberation Sans';transform:scaleX(0.8841);transform-origin:0 0;">Render</div>
<svg style="left:1751px;top:1053px;" width="16" height="16" viewBox="0 0 16 16"><circle cx="8" cy="8" r="6.3" fill="none" stroke="#777" stroke-width="1.2"/><ellipse cx="8" cy="8" rx="2.8" ry="6.3" fill="none" stroke="#777" stroke-width="1"/><path d="M1.7 8h12.6M2.8 4.5h10.4M2.8 11.5h10.4" stroke="#777" stroke-width="0.9"/></svg>
<div class="t" style="left:1770.0px;top:1054.3px;font-size:16px;line-height:16px;color:#222;font-weight:normal;font-style:normal;font-family:'Liberation Sans';transform:scaleX(0.8562);transform-origin:0 0;">EPSG:32651</div>
<svg style="left:1875px;top:1053px;" width="18" height="16" viewBox="0 0 18 16"><path d="M9 1c4.5 0 8 2.7 8 6s-3.5 6-8 6c-1 0-2-.1-2.8-.4L2 15l1.3-3.5C1.8 10.4 1 8.8 1 7c0-3.3 3.5-6 8-6z" fill="#606060"/><circle cx="5.5" cy="7" r="1.1" fill="#fff"/><circle cx="9" cy="7" r="1.1" fill="#fff"/><circle cx="12.5" cy="7" r="1.1" fill="#fff"/></svg>
<svg style="left:18px;top:88px;" width="6" height="16" viewBox="0 0 6 16"><rect x="0.5" y="0" width="1.2" height="1.2" fill="#c4c4c4"/><rect x="4" y="0" width="1.2" height="1.2" fill="#c4c4c4"/><rect x="0.5" y="4" width="1.2" height="1.2" fill="#c4c4c4"/><rect x="4" y="4" width="1.2" height="1.2" fill="#c4c4c4"/><rect x="0.5" y="8" width="1.2" height="1.2" fill="#c4c4c4"/><rect x="4" y="8" width="1.2" height="1.2" fill="#c4c4c4"/><rect x="0.5" y="12" width="1.2" height="1.2" fill="#c4c4c4"/><rect x="4" y="12" width="1.2" height="1.2" fill="#c4c4c4"/></svg>
<svg style="left:31px;top:84px;" width="24" height="24" viewBox="0 0 24 24"><path d="M5.5 2.5h9l4.5 4.5v14.5h-13.5z" fill="#fff" stroke="#777" stroke-width="1"/><path d="M14.5 2.5v4.5h4.5" fill="#eee" stroke="#777" stroke-width="1"/></svg>
<svg style="left:64px;top:84px;" width="24" height="24" viewBox="0 0 24 24"><path d="M2 6h7l2 2h10v3H2z" fill="#e9c43a"/><path d="M2 8h19v12H2z" fill="#f5d556"/><path d="M1.5 20l3-10h19l-3 10z" fill="#fbdc5a" stroke="#d9b536" stroke-width="0.8"/></svg>
<svg style="left:97px;top:84px;" width="24" height="24" viewBox="0 0 24 24"><rect x="2.5" y="2.5" width="19" height="19" rx="2" fill="#5b8ec7" stroke="#3d6ea8" stroke-width="0.8"/><rect x="6" y="3.2" width="12" height="8" fill="#fff"/><path d="M7.5 5.5h9M7.5 8.5h9" stroke="#555" stroke-width="0.9"/><rect x="6" y="14" width="12" height="7" fill="#eee"/><rect x="7.5" y="15.5" width="2.5" height="4.5" fill="#3d6ea8"/></svg>
<svg style="left:131px;top:84px;" width="24" height="24" viewBox="0 0 24 24"><path d="M4 3h11l4 4v13H4z" fill="#fff" stroke="#888" stroke-width="0.8"/><path d="M3 3h4v17h11v1H3z" fill="#f2d54c" stroke="#c9a520" stroke-width="0.7"/><path d="M3 3h9v4H7v14H3z" fill="#f6dc60" stroke="#c9a520" stroke-width="0.7"/><rect x="13" y="13" width="11" height="11" rx="2" fill="#d4aa00"/><path d="M18.5 14.6V22.4M15.11 16.55L21.89 20.45M15.11 20.45L21.89 16.55" stroke="#fff" stroke-width="1.3"/><circle cx="18.5" cy="18.5" r="1.5" fill="#d4aa00" stroke="#fff" stroke-width="0.9"/></svg>
<svg style="left:163px;top:84px;" width="24" height="24" viewBox="0 0 24 24"><path d="M2.5 3.5h15l4 4v13h-19z" fill="#fff" stroke="#777" stroke-width="0.9"/><path d="M4.5 6h11v12h-11z" fill="#eef3fa" stroke="#c8c8c8" stroke-width="0.6"/><path d="M7 6.5a3 3 0 1 0 3 3l-1.5-1.5z" fill="none" stroke="#666" stroke-width="1.8"/><path d="M10 10l4 4" stroke="#888" stroke-width="2.4"/><path d="M13 13l6 7" stroke="#e2cf6a" stroke-width="3"/><path d="M13 13l6 7" stroke="#8a7a30" stroke-width="0.5"/></svg>
<svg style="left:196px;top:84px;" width="24" height="24" viewBox="0 0 24 24"><circle cx="6.5" cy="7" r="4" fill="#d9603b"/><path d="M13.5 10.5l7-7" stroke="#5a7fb8" stroke-width="2.2" stroke-linecap="round"/><rect x="2.5" y="13" width="8" height="8" fill="#86b08c"/><text x="13" y="21.5" font-size="10" font-family="Liberation Sans" fill="#444">a</text></svg>
<svg style="left:232px;top:88px;" width="6" height="16" viewBox="0 0 6 16"><rect x="0.5" y="0" width="1.2" height="1.2" fill="#c4c4c4"/><rect x="4" y="0" width="1.2" height="1.2" fill="#c4c4c4"/><rect x="0.5" y="4" width="1.2" height="1.2" fill="#c4c4c4"/><rect x="4" y="4" width="1.2" height="1.2" fill="#c4c4c4"/><rect x="0.5" y="8" width="1.2" height="1.2" fill="#c4c4c4"/><rect x="4" y="8" width="1.2" height="1.2" fill="#c4c4c4"/><rect x="0.5" y="12" width="1.2" height="1.2" fill="#c4c4c4"/><rect x="4" y="12" width="1.2" height="1.2" fill="#c4c4c4"/></svg>
<div style="left:241px;top:81px;width:32px;height:30px;background:#dcdcdc;border:1px solid #c2c2c2;border-radius:3px;box-sizing:border-box"></div>
<svg style="left:245px;top:84px;" width="24" height="24" viewBox="0 0 24 24"><path d="M7 21c-1-2-5-7-5-9 0-1.5 2-1.5 3 0l2 2V5c0-1.6 2.4-1.6 2.4 0v6V3.5c0-1.6 2.4-1.6 2.4 0V11V4.5c0-1.6 2.4-1.6 2.4 0V11V6.5c0-1.6 2.4-1.6 2.4 0V15c0 3-1 4.5-2 6z" fill="#fff" stroke="#111" stroke-width="1.1"/></svg>
<svg style="left:278px;top:84px;" width="24" height="24" viewBox="0 0 24 24"><rect x="3" y="4" width="14" height="14" fill="#f3dc3a"/><path d="M12 1l3.5 3.5h-2v3h-3v-3h-2z M12 23l3.5-3.5h-2v-3h-3v3h-2z M1 12l3.5-3.5v2h3v3h-3v2z M23 12l-3.5-3.5v2h-3v3h3v2z" fill="#5b8ec7" stroke="#3d6ea8" stroke-width="0.5"/></svg>
<svg style="left:311px;top:84px;" width="24" height="24" viewBox="0 0 24 24"><path d="M9.96 14.04L2.5 21.5" stroke="#333" stroke-width="0" /><path d="M9.46 14.54L3 21" stroke="#e8c640" stroke-width="3.6" stroke-linecap="butt"/><path d="M9.46 14.54L3 21" stroke="#8a7a30" stroke-width="0.6" stroke-dasharray="0"/><circle cx="15" cy="9" r="7" fill="#f4f4f4" stroke="#777" stroke-width="1.3"/><path d="M15 5.5v7M11.5 9h7" stroke="#5b8ec7" stroke-width="2"/></svg>
<svg style="left:344px;top:84px;" width="24" height="24" viewBox="0 0 24 24"><path d="M9.96 14.04L2.5 21.5" stroke="#333" stroke-width="0" /><path d="M9.46 14.54L3 21" stroke="#e8c640" stroke-width="3.6" stroke-linecap="butt"/><path d="M9.46 14.54L3 21" stroke="#8a7a30" stroke-width="0.6" stroke-dasharray="0"/><circle cx="15" cy="9" r="7" fill="#f4f4f4" stroke="#777" stroke-width="1.3"/><path d="M11.5 9h7" stroke="#5b8ec7" stroke-width="2"/></svg>
<svg style="left:377px;top:84px;" width="24" height="24" viewBox="0 0 24 24"><path d="M3 2h7l-2.5 2.5 3 3-2 2-3-3L3 9z M22 2v7l-2.5-2.5-3 3-2-2 3-3L15 2z M22 22h-7l2.5-2.5-3-3 2-2 3 3L22 15z" fill="#5b8ec7"/><path d="M7.68 16.32L2.5 21.5" stroke="#333" stroke-width="0" /><path d="M7.18 16.82L3 21" stroke="#e8c640" stroke-width="3.6" stroke-linecap="butt"/><path d="M7.18 16.82L3 21" stroke="#8a7a30" stroke-width="0.6" stroke-dasharray="0"/><circle cx="12" cy="12" r="6" fill="#f4f4f4" stroke="#777" stroke-width="1.3"/></svg>
<svg style="left:410px;top:84px;" width="24" height="24" viewBox="0 0 24 24"><rect x="3" y="4" width="9" height="12" fill="#f3dc3a" stroke="#caa81c" stroke-width="0.6"/><path d="M9.96 14.04L2.5 21.5" stroke="#333" stroke-width="0" /><path d="M9.46 14.54L3 21" stroke="#e8c640" stroke-width="3.6" stroke-linecap="butt"/><path d="M9.46 14.54L3 21" stroke="#8a7a30" stroke-width="0.6" stroke-dasharray="0"/><circle cx="15" cy="9" r="7" fill="#ecefe0" stroke="#777" stroke-width="1.3"/></svg>
<svg style="left:443px;top:84px;" width="24" height="24" viewBox="0 0 24 24"><rect x="3" y="4" width="9" height="12" fill="#f2f2f2" stroke="#aaa" stroke-width="0.7"/><path d="M9.96 14.04L2.5 21.5" stroke="#333" stroke-width="0" /><path d="M9.46 14.54L3 21" stroke="#e8c640" stroke-width="3.6" stroke-linecap="butt"/><path d="M9.46 14.54L3 21" stroke="#8a7a30" stroke-width="0.6" stroke-dasharray="0"/><circle cx="15" cy="9" r="7" fill="#eee" stroke="#777" stroke-width="1.3"/></svg>
<svg style="left:476px;top:84px;" width="24" height="24" viewBox="0 0 24 24"><rect x="3" y="3" width="9" height="10" fill="#ececec" stroke="#d6d6d6" stroke-width="0.7"/><path d="M8.96 14.04L2.5 21.5" stroke="#333" stroke-width="0" /><path d="M8.46 14.54L3 21" stroke="#d6d6d6" stroke-width="3.6" stroke-linecap="butt"/><path d="M8.46 14.54L3 21" stroke="#ccc" stroke-width="0.6" stroke-dasharray="0"/><circle cx="14" cy="9" r="7" fill="#f0f0f0" stroke="#cfcfcf" stroke-width="1.3"/><text x="9.5" y="12.5" font-size="8" font-weight="bold" font-family="Liberation Sans" fill="#cdcdcd">1:1</text></svg>
<svg style="left:509px;top:84px;" width="24" height="24" viewBox="0 0 24 24"><path d="M8.96 14.04L2.5 21.5" stroke="#333" stroke-width="0" /><path d="M8.46 14.54L3 21" stroke="#d6d6d6" stroke-width="3.6" stroke-linecap="butt"/><path d="M8.46 14.54L3 21" stroke="#ccc" stroke-width="0.6" stroke-dasharray="0"/><circle cx="14" cy="9" r="7" fill="#f0f0f0" stroke="#cfcfcf" stroke-width="1.3"/><rect x="13" y="14" width="9" height="9" fill="#d8d8d8"/><path d="M20 15.5l-5 3 5 3" fill="none" stroke="#f4f4f4" stroke-width="1.5"/></svg>
<svg style="left:542px;top:84px;" width="24" height="24" viewBox="0 0 24 24"><path d="M8.96 14.04L2.5 21.5" stroke="#333" stroke-width="0" /><path d="M8.46 14.54L3 21" stroke="#d6d6d6" stroke-width="3.6" stroke-linecap="butt"/><path d="M8.46 14.54L3 21" stroke="#ccc" stroke-width="0.6" stroke-dasharray="0"/><circle cx="14" cy="9" r="7" fill="#f0f0f0" stroke="#cfcfcf" stroke-width="1.3"/><rect x="13" y="14" width="9" height="9" fill="#d8d8d8"/><path d="M15 15.5l5 3-5 3" fill="none" stroke="#f4f4f4" stroke-width="1.5"/></svg>
<svg style="left:575px;top:84px;" width="24" height="24" viewBox="0 0 24 24"><path d="M4 3h15v17H6c-1.5 0-2.5-1-2.5-2.5z" fill="#e6e6e6" stroke="#888" stroke-width="0.8"/><path d="M3.5 4c0-1 1-1.5 2-1.5s1.5 1 1.5 2V20" fill="#fafafa" stroke="#888" stroke-width="0.8"/><rect x="13" y="13" width="11" height="11" rx="2" fill="#d4aa00"/><path d="M18.5 14.6V22.4M15.11 16.55L21.89 20.45M15.11 20.45L21.89 16.55" stroke="#fff" stroke-width="1.3"/><circle cx="18.5" cy="18.5" r="1.5" fill="#d4aa00" stroke="#fff" stroke-width="0.9"/></svg>
<svg style="left:608px;top:84px;" width="24" height="24" viewBox="0 0 24 24"><path d="M2 16l4-8 6-3 8 1-1 11-8 1z" fill="#e4e4e4" stroke="#999" stroke-width="0.8"/><path d="M6 9l5 3 8-1M11 12l-2 7" stroke="#bbb" stroke-width="0.6" fill="none"/><rect x="13" y="13" width="11" height="11" rx="2" fill="#d4aa00"/><path d="M18.5 14.6V22.4M15.11 16.55L21.89 20.45M15.11 20.45L21.89 16.55" stroke="#fff" stroke-width="1.3"/><circle cx="18.5" cy="18.5" r="1.5" fill="#d4aa00" stroke="#fff" stroke-width="0.9"/></svg>
<svg style="left:644px;top:84px;" width="24" height="24" viewBox="0 0 24 24"><path d="M5 2h10v20l-5-4-5 4z" fill="#5b8ec7" stroke="#3d6ea8" stroke-width="0.8"/><rect x="13" y="13" width="11" height="11" rx="2" fill="#d4aa00"/><path d="M18.5 14.6V22.4M15.11 16.55L21.89 20.45M15.11 20.45L21.89 16.55" stroke="#fff" stroke-width="1.3"/><circle cx="18.5" cy="18.5" r="1.5" fill="#d4aa00" stroke="#fff" stroke-width="0.9"/></svg>
<svg style="left:675px;top:84px;" width="24" height="24" viewBox="0 0 24 24"><path d="M4 3h15v17H6c-1.5 0-2.5-1-2.5-2.5z" fill="#eaeaea" stroke="#888" stroke-width="0.8"/><path d="M3.5 4c0-1 1-1.5 2-1.5s1.5 1 1.5 2V20" fill="#fafafa" stroke="#888" stroke-width="0.8"/><path d="M12 1.5h4v8l-2-2-2 2z" fill="#5b8ec7" stroke="#3d6ea8" stroke-width="0.6"/></svg>
<svg style="left:707px;top:84px;" width="24" height="24" viewBox="0 0 24 24"><circle cx="12" cy="12" r="10" fill="#fafafa" stroke="#555" stroke-width="1.2"/><path d="M12 5v7l4 3" fill="none" stroke="#555" stroke-width="1.3"/></svg>
<svg style="left:740px;top:84px;" width="24" height="24" viewBox="0 0 24 24"><path d="M4 11c0-5 5-8 10-6l2-3 3 8-8 0 3-2c-3-2-7 0-7 3z" fill="#4f88c6"/><path d="M20 13c0 5-5 8-10 6l-2 3-3-8 8 0-3 2c3 2 7 0 7-3z" fill="#4f88c6"/></svg>
<svg style="left:776px;top:88px;" width="6" height="16" viewBox="0 0 6 16"><rect x="0.5" y="0" width="1.2" height="1.2" fill="#c4c4c4"/><rect x="4" y="0" width="1.2" height="1.2" fill="#c4c4c4"/><rect x="0.5" y="4" width="1.2" height="1.2" fill="#c4c4c4"/><rect x="4" y="4" width="1.2" height="1.2" fill="#c4c4c4"/><rect x="0.5" y="8" width="1.2" height="1.2" fill="#c4c4c4"/><rect x="4" y="8" width="1.2" height="1.2" fill="#c4c4c4"/><rect x="0.5" y="12" width="1.2" height="1.2" fill="#c4c4c4"/><rect x="4" y="12" width="1.2" height="1.2" fill="#c4c4c4"/></svg>
<svg style="left:789px;top:84px;" width="24" height="24" viewBox="0 0 24 24"><circle cx="9" cy="9" r="8" fill="#5b8ec7"/><text x="6.5" y="14" font-size="11" font-style="italic" font-weight="bold" font-family="Liberation Serif" fill="#fff">i</text><path d="M12 11l9 5-4 1 3 4-2 1.5-3-4-3 3z" fill="#fff" stroke="#333" stroke-width="0.8"/></svg>
<svg style="left:822px;top:84px;" width="24" height="24" viewBox="0 0 24 24"><path d="M3 2v20M21 2v20M2 22h20" stroke="#555" stroke-width="1.4"/><path d="M3 6h18M3 12h18M3 17h18" stroke="#999" stroke-width="0.8"/><g fill="#fff" stroke-width="1"><path d="M8 4l2 2-2 2-2-2z M14 4l2 2-2 2-2-2z" stroke="#d03030"/><path d="M6 10l2 2-2 2-2-2z M10 10l2 2-2 2-2-2z" stroke="#3aa040"/><path d="M7 15l2 2-2 2-2-2z M12 15l2 2-2 2-2-2z M17 15l2 2-2 2-2-2z" stroke="#4a7ac0"/></g></svg>
<svg style="left:855px;top:84px;" width="24" height="24" viewBox="0 0 24 24"><g fill="#6b9ad8" stroke="#4a78b8" stroke-width="0.5"><circle cx="12" cy="12" r="6.5"/><path d="M10.5 1h3v5h-3z M10.5 18h3v5h-3z M1 10.5v3h5v-3z M18 10.5v3h5v-3z M3.5 5.6l2.1-2.1 3.5 3.5-2.1 2.1z M15 17.1l2.1-2.1 3.5 3.5-2.1 2.1z M18.4 3.5l2.1 2.1-3.5 3.5-2.1-2.1z M6.9 15l2.1 2.1-3.5 3.5-2.1-2.1z"/></g><circle cx="12" cy="12" r="2.6" fill="#eef3fb"/></svg>
<svg style="left:888px;top:84px;" width="24" height="24" viewBox="0 0 24 24"><path d="M5 2h14v4.5h-2L16 4.5H9.5L15 12l-6 7.5H16.5l1-2.5h2V22H5v-1.5L12 12 5 3.5z" fill="#8a1a9a"/></svg>
<svg style="left:921px;top:84px;" width="24" height="24" viewBox="0 0 24 24"><rect x="2.5" y="3.5" width="19" height="17" fill="#fff" stroke="#5b8ec7" stroke-width="1"/><rect x="2.5" y="3.5" width="19" height="3.5" fill="#a9c6ea"/><path d="M5 10h3M10 10h9M5 13h3M10 13h9M5 16h3M10 16h9" stroke="#5b8ec7" stroke-width="1.2"/></svg>
<svg style="left:951.0px;top:93.5px;" width="8" height="5" viewBox="0 0 8 5"><path d="M0 0H8L4.0 5Z" fill="#444"/></svg>
<svg style="left:966px;top:84px;" width="24" height="24" viewBox="0 0 24 24"><path d="M3 4h18M3 2.5v3M21 2.5v3" stroke="#1a3a6a" stroke-width="1.5"/><rect x="1.5" y="10" width="21" height="8" rx="1" fill="#999" stroke="#555" stroke-width="0.8"/><path d="M5 10v3M8 10v4.5M11 10v3M14 10v4.5M17 10v3M20 10v3" stroke="#fff" stroke-width="0.8"/></svg>
<svg style="left:996.0px;top:93.5px;" width="8" height="5" viewBox="0 0 8 5"><path d="M0 0H8L4.0 5Z" fill="#444"/></svg>
<svg style="left:1011px;top:84px;" width="24" height="24" viewBox="0 0 24 24"><path d="M4 3h15c2 0 3 1 3 3v4c0 2-1 3-3 3h-8l-4 6 1-6H4c-2 0-3-1-3-3V6c0-2 1-3 3-3z" fill="#fbe77c" stroke="#d9b536" stroke-width="0.8"/><circle cx="6" cy="19.5" r="3.5" fill="#6aa06a" stroke="#3f7f3f" stroke-width="0.7"/></svg>
<svg style="left:1044px;top:84px;" width="24" height="24" viewBox="0 0 24 24"><circle cx="10" cy="10" r="7.5" fill="none" stroke="#d2d2d2" stroke-width="1.5" stroke-dasharray="2.5 1.5"/><circle cx="10" cy="10" r="5" fill="#dcdcdc"/><path d="M8.5 7.5v5l4-2.5z" fill="#f4f4f4"/><path d="M13 13l7 4-3 1 2 3-1.5 1-2-3-2.5 2z" fill="#f2f2f2" stroke="#d0d0d0" stroke-width="0.8"/></svg>
<svg style="left:1074.0px;top:93.5px;" width="8" height="5" viewBox="0 0 8 5"><path d="M0 0H8L4.0 5Z" fill="#d0d0d0"/></svg>
<svg style="left:1092px;top:88px;" width="6" height="16" viewBox="0 0 6 16"><rect x="0.5" y="0" width="1.2" height="1.2" fill="#c4c4c4"/><rect x="4" y="0" width="1.2" height="1.2" fill="#c4c4c4"/><rect x="0.5" y="4" width="1.2" height="1.2" fill="#c4c4c4"/><rect x="4" y="4" width="1.2" height="1.2" fill="#c4c4c4"/><rect x="0.5" y="8" width="1.2" height="1.2" fill="#c4c4c4"/><rect x="4" y="8" width="1.2" height="1.2" fill="#c4c4c4"/><rect x="0.5" y="12" width="1.2" height="1.2" fill="#c4c4c4"/><rect x="4" y="12" width="1.2" height="1.2" fill="#c4c4c4"/></svg>
<svg style="left:1106px;top:84px;" width="24" height="24" viewBox="0 0 24 24"><rect x="2.5" y="2.5" width="18" height="18" fill="#e0e0e0" stroke="#333" stroke-width="0.8" stroke-dasharray="1.5 1"/><rect x="3" y="3" width="11" height="11" fill="#f3dc3a"/><path d="M12 11l9 6-4 .8 3 4-2 1.4-2.8-4-3 2.6z" fill="#fff" stroke="#222" stroke-width="0.8"/></svg>
<svg style="left:1135.0px;top:93.5px;" width="8" height="5" viewBox="0 0 8 5"><path d="M0 0H8L4.0 5Z" fill="#444"/></svg>
<svg style="left:1151px;top:84px;" width="24" height="24" viewBox="0 0 24 24"><rect x="11" y="10" width="12" height="12" fill="#f3dc3a" stroke="#d4b01c" stroke-width="0.8"/><text x="0" y="16" font-size="21" font-family="Liberation Serif" fill="#4a2a6a">ε</text></svg>
<svg style="left:1180.0px;top:93.5px;" width="8" height="5" viewBox="0 0 8 5"><path d="M0 0H8L4.0 5Z" fill="#444"/></svg>
<svg style="left:1196px;top:84px;" width="24" height="24" viewBox="0 0 24 24"><rect x="2" y="2" width="12" height="12" fill="#f3dc3a" stroke="#caa81c" stroke-width="0.8"/><rect x="6" y="6" width="12" height="12" fill="#f3dc3a" stroke="#caa81c" stroke-width="0.8"/><rect x="13" y="13" width="10" height="10" rx="2" fill="#d03030"/><circle cx="18" cy="18" r="3.2" fill="none" stroke="#fff" stroke-width="1.3"/><path d="M16 20l4-4" stroke="#fff" stroke-width="1.3"/></svg>
<svg style="left:1225.0px;top:93.5px;" width="8" height="5" viewBox="0 0 8 5"><path d="M0 0H8L4.0 5Z" fill="#444"/></svg>
<svg style="left:1241px;top:84px;" width="24" height="24" viewBox="0 0 24 24"><rect x="2" y="2" width="14" height="14" fill="#f3dc3a" stroke="#caa81c" stroke-width="0.8"/><path d="M17 23l-3.5-5.5a3.8 3.8 0 1 1 7 0z" fill="#6a8cb0"/><circle cx="17" cy="15.5" r="1.5" fill="#fff"/></svg>
<svg style="left:1270.0px;top:93.5px;" width="8" height="5" viewBox="0 0 8 5"><path d="M0 0H8L4.0 5Z" fill="#444"/></svg>
<svg style="left:1287px;top:88px;" width="6" height="16" viewBox="0 0 6 16"><rect x="0.5" y="0" width="1.2" height="1.2" fill="#c4c4c4"/><rect x="4" y="0" width="1.2" height="1.2" fill="#c4c4c4"/><rect x="0.5" y="4" width="1.2" height="1.2" fill="#c4c4c4"/><rect x="4" y="4" width="1.2" height="1.2" fill="#c4c4c4"/><rect x="0.5" y="8" width="1.2" height="1.2" fill="#c4c4c4"/><rect x="4" y="8" width="1.2" height="1.2" fill="#c4c4c4"/><rect x="0.5" y="12" width="1.2" height="1.2" fill="#c4c4c4"/><rect x="4" y="12" width="1.2" height="1.2" fill="#c4c4c4"/></svg>
<svg style="left:1302px;top:84px;" width="24" height="24" viewBox="0 0 24 24"><path d="M2 4h9l3 4 4 3" fill="none" stroke="#2a4a7a" stroke-width="1"/><text x="1" y="20" font-size="15" font-weight="bold" font-family="Liberation Sans" fill="#5b8ec7" stroke="#2a5a9a" stroke-width="0.5">A</text><path d="M17.5 1l1 2.5 2.5.2-2 1.6.7 2.5-2.2-1.4-2.2 1.4.7-2.5-2-1.6 2.5-.2z" fill="#5b8ec7"/><rect x="13" y="13" width="10" height="10" rx="1.5" fill="#f0cf30"/><path d="M18 15v6M15.5 16.5l5 3M20.5 16.5l-5 3" stroke="#fff" stroke-width="1.1"/></svg>
<svg style="left:1331.0px;top:93.5px;" width="8" height="5" viewBox="0 0 8 5"><path d="M0 0H8L4.0 5Z" fill="#444"/></svg>
<svg style="left:1346px;top:84px;" width="24" height="24" viewBox="0 0 24 24"><path d="M3 3h18v18H3z" fill="none" stroke="#777" stroke-width="0.9" stroke-dasharray="1.2 2"/><rect x="1.5" y="1.5" width="3" height="3" fill="#fff" stroke="#555" stroke-width="0.8"/><rect x="19.5" y="1.5" width="3" height="3" fill="#fff" stroke="#555" stroke-width="0.8"/><rect x="1.5" y="19.5" width="3" height="3" fill="#fff" stroke="#555" stroke-width="0.8"/><path d="M6 3l12 10-5 .8 3.5 5-2.5 1.7-3.5-5-3.5 3.5z" fill="#fff" stroke="#222" stroke-width="1"/></svg>
<svg style="left:1379px;top:84px;" width="24" height="24" viewBox="0 0 24 24"><path d="M4 3L20 2 14 19 4 15z" fill="none" stroke="#333" stroke-width="1.2"/><g fill="#3a7ae0"><circle cx="4" cy="3" r="2.4"/><circle cx="20" cy="2.5" r="2.4"/><circle cx="14" cy="19" r="2.4"/><circle cx="4" cy="15" r="2.4"/></g><rect x="14" y="14" width="10" height="10" rx="2" fill="#4e9a4e" stroke="#2f6f2f" stroke-width="0.6"/><path d="M19.0 16.2V21.8M16.2 19.0H21.8" stroke="#fff" stroke-width="2.2"/></svg>
<svg style="left:1412px;top:84px;" width="24" height="24" viewBox="0 0 24 24"><path d="M20 3H5L3 12l5 9" fill="none" stroke="#333" stroke-width="1.2"/><g fill="#3a7ae0"><circle cx="20" cy="3" r="2.4"/><circle cx="5" cy="3" r="2.4"/><circle cx="3" cy="12" r="2.4"/><circle cx="8" cy="21" r="2.4"/></g><rect x="14" y="14" width="10" height="10" rx="2" fill="#4e9a4e" stroke="#2f6f2f" stroke-width="0.6"/><path d="M19.0 16.2V21.8M16.2 19.0H21.8" stroke="#fff" stroke-width="2.2"/></svg>
<svg style="left:1446px;top:84px;" width="24" height="24" viewBox="0 0 24 24"><path d="M10 1.5l2.8 6 6.5.6-4.9 4.3 1.5 6.4L10 15.5l-5.9 3.3 1.5-6.4L.7 8.1l6.5-.6z" fill="#fbe29a" stroke="#e0b050" stroke-width="0.8"/><rect x="14" y="14" width="10" height="10" rx="2" fill="#4e9a4e" stroke="#2f6f2f" stroke-width="0.6"/><path d="M19.0 16.2V21.8M16.2 19.0H21.8" stroke="#fff" stroke-width="2.2"/></svg>
<svg style="left:1479px;top:84px;" width="24" height="24" viewBox="0 0 24 24"><text x="4" y="16" font-size="17" font-weight="bold" font-family="Liberation Serif" fill="#333">T</text><rect x="0.5" y="17" width="3" height="3" fill="none" stroke="#777" stroke-width="0.8"/><rect x="14" y="14" width="10" height="10" rx="2" fill="#4e9a4e" stroke="#2f6f2f" stroke-width="0.6"/><path d="M19.0 16.2V21.8M16.2 19.0H21.8" stroke="#fff" stroke-width="2.2"/></svg>
<svg style="left:1512px;top:84px;" width="24" height="24" viewBox="0 0 24 24"><text x="0" y="10" font-size="8" font-weight="bold" font-family="Liberation Sans" fill="#333" transform="rotate(-15 4 8)">a</text><text x="7" y="7" font-size="8" font-weight="bold" font-family="Liberation Sans" fill="#333">b</text><text x="13" y="7" font-size="8" font-weight="bold" font-family="Liberation Sans" fill="#333">c</text><g fill="none" stroke="#888" stroke-width="0.8"><rect x="1" y="14" width="2.5" height="2.5"/><rect x="8" y="11" width="2.5" height="2.5"/><rect x="15" y="9" width="2.5" height="2.5"/></g><rect x="14" y="14" width="10" height="10" rx="2" fill="#4e9a4e" stroke="#2f6f2f" stroke-width="0.6"/><path d="M19.0 16.2V21.8M16.2 19.0H21.8" stroke="#fff" stroke-width="2.2"/></svg>
<svg style="left:1545px;top:84px;" width="24" height="24" viewBox="0 0 24 24"><rect x="1.5" y="1.5" width="17" height="17" fill="#f2f2f2" stroke="#777" stroke-width="0.9"/><text x="4" y="16" font-size="16" font-weight="bold" font-family="Liberation Serif" fill="#333">T</text><rect x="14" y="14" width="10" height="10" rx="2" fill="#4e9a4e" stroke="#2f6f2f" stroke-width="0.6"/><path d="M19.0 16.2V21.8M16.2 19.0H21.8" stroke="#fff" stroke-width="2.2"/></svg>
<svg style="left:1578px;top:84px;" width="24" height="24" viewBox="0 0 24 24"><rect x="1" y="3" width="20" height="15" fill="#f0d070"/><path d="M1 3h20v10l-9-5-11 4z" fill="#4a9ee0"/><path d="M1 12l9-5 11 5v6H1z" fill="#d4b050"/><rect x="14" y="14" width="10" height="10" rx="2" fill="#4e9a4e" stroke="#2f6f2f" stroke-width="0.6"/><path d="M19.0 16.2V21.8M16.2 19.0H21.8" stroke="#fff" stroke-width="2.2"/></svg>
<div style="left:1609px;top:84px;width:1px;height:24px;background:#d4d4d4"></div>
<svg style="left:1617px;top:84px;" width="24" height="24" viewBox="0 0 24 24"><path d="M2 2h20v14H10l-7 6 3-6H2z" fill="#fff" stroke="#777" stroke-width="0.9"/><path d="M4 5h6M4 8h5M4 11h6M4 14h4" stroke="#5b8ec7" stroke-width="1.3"/><path d="M13 5l-2.5 3 2.5 3M18 5l2.5 3-2.5 3M16.5 4l-2 8" fill="none" stroke="#333" stroke-width="1"/></svg>
<svg style="left:1647.0px;top:93.5px;" width="8" height="5" viewBox="0 0 8 5"><path d="M0 0H8L4.0 5Z" fill="#444"/></svg>
<svg style="left:1665px;top:88px;" width="6" height="16" viewBox="0 0 6 16"><rect x="0.5" y="0" width="1.2" height="1.2" fill="#c4c4c4"/><rect x="4" y="0" width="1.2" height="1.2" fill="#c4c4c4"/><rect x="0.5" y="4" width="1.2" height="1.2" fill="#c4c4c4"/><rect x="4" y="4" width="1.2" height="1.2" fill="#c4c4c4"/><rect x="0.5" y="8" width="1.2" height="1.2" fill="#c4c4c4"/><rect x="4" y="8" width="1.2" height="1.2" fill="#c4c4c4"/><rect x="0.5" y="12" width="1.2" height="1.2" fill="#c4c4c4"/><rect x="4" y="12" width="1.2" height="1.2" fill="#c4c4c4"/></svg>
<svg style="left:1677px;top:84px;" width="24" height="24" viewBox="0 0 24 24"><path d="M4 5h19v10H4l-3.5-5z" fill="#f6dc32" stroke="#c9a520" stroke-width="0.8"/><text x="5.5" y="13.3" font-size="8.5" font-weight="bold" font-family="Liberation Sans" fill="#333">abc</text></svg>
<svg style="left:1710px;top:84px;" width="24" height="24" viewBox="0 0 24 24"><circle cx="8" cy="8" r="7" fill="#d02020"/><path d="M8 8V1a7 7 0 0 0-6.8 8.7z" fill="#2a9a3a"/><path d="M8 8l6.8-1.8A7 7 0 0 0 8 1z" fill="#f0d020"/><rect x="10" y="14" width="4" height="9" fill="#f0d020"/><rect x="14" y="10" width="4" height="13" fill="#2a9a3a"/><rect x="18" y="17" width="4" height="6" fill="#a01010"/></svg>
<div style="left:1743px;top:84px;width:1px;height:24px;background:#d4d4d4"></div>
<svg style="left:1751px;top:84px;" width="24" height="24" viewBox="0 0 24 24"><path d="M5 3h16v10H5L1.5 8z" fill="#c6dcf4" stroke="#5b8ec7" stroke-width="0.8"/><text x="5.5" y="11.5" font-size="8.5" font-weight="bold" font-family="Liberation Sans" fill="#333">ab</text><path d="M17 9v7" stroke="#777" stroke-width="1.2"/><circle cx="17.5" cy="18.5" r="4" fill="#c02020"/></svg>
<svg style="left:1783px;top:84px;" width="24" height="24" viewBox="0 0 24 24"><path d="M4 3h19v10H4l-3.5-5z" fill="#fff" stroke="#d02020" stroke-width="1.1"/><text x="5.5" y="11.5" font-size="8.5" font-weight="bold" font-family="Liberation Sans" fill="#d02020">abc</text></svg>
<div style="left:1816px;top:84px;width:1px;height:24px;background:#d4d4d4"></div>
<svg style="left:1824px;top:84px;" width="24" height="24" viewBox="0 0 24 24"><path d="M5 3h16v10H5L1.5 8z" fill="#e2e2e2" stroke="#d0d0d0" stroke-width="0.8"/><text x="5.5" y="11.5" font-size="8.5" font-weight="bold" font-family="Liberation Sans" fill="#cfcfcf">ab</text><path d="M17 9v7" stroke="#d0d0d0" stroke-width="1.2"/><circle cx="17.5" cy="18.5" r="4" fill="#d2d2d2"/></svg>
<svg style="left:1857px;top:84px;" width="24" height="24" viewBox="0 0 24 24"><path d="M5 3h16v10H5L1.5 8z" fill="#e2e2e2" stroke="#d0d0d0" stroke-width="0.8"/><text x="5" y="11.5" font-size="8.5" font-weight="bold" font-family="Liberation Sans" fill="#cfcfcf">abc</text><path d="M8 19c3-3 9-3 12 0-3 3-9 3-12 0z" fill="none" stroke="#d0d0d0" stroke-width="1"/><circle cx="14" cy="19" r="1.5" fill="#d0d0d0"/></svg>
<svg style="left:1906px;top:91px;" width="12" height="11" viewBox="0 0 12 11"><path d="M2 2l3.5 3.5L2 9M6.5 2L10 5.5 6.5 9" fill="none" stroke="#333" stroke-width="1.4"/></svg>
<svg style="left:18px;top:127px;" width="6" height="16" viewBox="0 0 6 16"><rect x="0.5" y="0" width="1.2" height="1.2" fill="#c4c4c4"/><rect x="4" y="0" width="1.2" height="1.2" fill="#c4c4c4"/><rect x="0.5" y="4" width="1.2" height="1.2" fill="#c4c4c4"/><rect x="4" y="4" width="1.2" height="1.2" fill="#c4c4c4"/><rect x="0.5" y="8" width="1.2" height="1.2" fill="#c4c4c4"/><rect x="4" y="8" width="1.2" height="1.2" fill="#c4c4c4"/><rect x="0.5" y="12" width="1.2" height="1.2" fill="#c4c4c4"/><rect x="4" y="12" width="1.2" height="1.2" fill="#c4c4c4"/></svg>
<svg style="left:31px;top:123px;" width="24" height="24" viewBox="0 0 24 24"><path d="M4 9l5 5c2 2 4 2 5.5 0.5S16 9.5 14 7.5L9 2.5 12.5-1 17.5 4c4 4 4 9 0.5 12.5S9.5 20.5 5.5 16.5L0.5 11.5z" fill="#d41010" transform="translate(1 3)"/><path d="M1.5 14.5l3.5-3.5 2.5 2.5-3.5 3.5z M10 6l3.5-3.5 2.5 2.5-3.5 3.5z" fill="#f4d0d0"/></svg>
<svg style="left:65px;top:123px;" width="24" height="24" viewBox="0 0 24 24"><path d="M4 20L8 11 4 4M8 11l6-4h7M8 11l6 3h7M8 11v7" fill="none" stroke="#d6d6d6" stroke-width="1.5"/><g fill="#f0f0f0" stroke="#d2d2d2"><circle cx="4" cy="4" r="1.5"/><circle cx="14" cy="7" r="1.5"/><circle cx="20" cy="7" r="1.5"/><circle cx="14" cy="14" r="1.5"/><circle cx="20" cy="14" r="1.5"/><circle cx="8" cy="18" r="1.5"/></g></svg>
<svg style="left:83.0px;top:143.5px;" width="8" height="5" viewBox="0 0 8 5"><path d="M0 0H8L4.0 5Z" fill="#d8d8d8"/></svg>
<div style="left:93px;top:120.5px;width:31px;height:30px;background:#e2e2e2;border:1px solid #d2d2d2;border-radius:3px;box-sizing:border-box"></div>
<svg style="left:96px;top:124px;" width="24" height="24" viewBox="0 0 24 24"><g fill="none" stroke="#c4c4c4" stroke-width="0.9"><circle cx="7" cy="5" r="1.6"/><circle cx="18" cy="7" r="1.6"/><circle cx="12" cy="16" r="1.6"/></g></svg>
<div style="left:127px;top:121px;width:122px;height:29px;background:#ececec;border:1px solid #cfcfcf;border-radius:3px;box-sizing:border-box"></div>
<div style="left:236px;top:122px;width:1px;height:27px;background:#d6d6d6"></div>
<svg style="left:239.0px;top:128.5px;" width="7" height="4" viewBox="0 0 7 4"><path d="M0 4H7L3.5 0Z" fill="#d0d0d0"/></svg>
<svg style="left:239.0px;top:139.0px;" width="7" height="4" viewBox="0 0 7 4"><path d="M0 0H7L3.5 4Z" fill="#d0d0d0"/></svg>
<div class="t" style="left:133.0px;top:128.0px;font-size:16px;line-height:16px;color:#b8b8b8;font-weight:normal;font-style:normal;font-family:'Liberation Sans';transform:scaleX(1.0135);transform-origin:0 0;">12</div>
<div style="left:251px;top:121px;width:112px;height:29px;background:linear-gradient(#f4f4f4,#ececec);border:1px solid #d2d2d2;border-radius:3px;box-sizing:border-box"></div>
<div class="t" style="left:256.0px;top:128.0px;font-size:16px;line-height:16px;color:#bdbdbd;font-weight:normal;font-style:normal;font-family:'Liberation Sans';transform:scaleX(0.9434);transform-origin:0 0;">px</div>
<svg style="left:348.0px;top:133.0px;" width="8" height="5" viewBox="0 0 8 5"><path d="M0 0H8L4.0 5Z" fill="#d0d0d0"/></svg>
<svg style="left:370px;top:123px;" width="24" height="24" viewBox="0 0 24 24"><path d="M10 10L3 1M10 10l11-4M10 10v12" stroke="#5a9a5a" stroke-width="1.8"/><circle cx="10" cy="10" r="2.2" fill="#eee" stroke="#666" stroke-width="1"/></svg>
<svg style="left:403px;top:123px;" width="24" height="24" viewBox="0 0 24 24"><path d="M11 3c5-2 10 0 10 4s-3 4-6 4" fill="#c2c2c2" stroke="#444" stroke-width="1"/><path d="M3 7c0-4 4-5 7-4s4 4 4 8 3 6 3 9-4 4-6 2-3-5-5-7-3-4-3-8z" fill="#88c878" stroke="#333" stroke-width="1"/></svg>
<svg style="left:421.0px;top:143.5px;" width="8" height="5" viewBox="0 0 8 5"><path d="M0 0H8L4.0 5Z" fill="#333"/></svg>
<svg style="left:436px;top:123px;" width="24" height="24" viewBox="0 0 24 24"><path d="M2 2l20 20M22 2L2 22" stroke="#dadada" stroke-width="1.8"/><circle cx="12" cy="12" r="2" fill="none" stroke="#d8d8d8"/></svg>
<svg style="left:467px;top:123px;" width="24" height="24" viewBox="0 0 24 24"><path d="M2 22l20-20M4 4l16 16" stroke="#dadada" stroke-width="1.8"/><path d="M5 8l6 3 6-3-3 6 3 6-6-3-6 3 3-6z" fill="#dcdcdc"/></svg>
<svg style="left:497.0px;top:132.5px;" width="8" height="5" viewBox="0 0 8 5"><path d="M0 0H8L4.0 5Z" fill="#d8d8d8"/></svg>
<svg style="left:512px;top:123px;" width="24" height="24" viewBox="0 0 24 24"><path d="M3 20l6-12 6 12 6-15" fill="none" stroke="#dcdcdc" stroke-width="2.2"/><circle cx="9" cy="8" r="2.5" fill="none" stroke="#d4d4d4"/><circle cx="15" cy="19" r="2.5" fill="none" stroke="#d4d4d4"/></svg>
<svg style="left:550px;top:127px;" width="6" height="16" viewBox="0 0 6 16"><rect x="0.5" y="0" width="1.2" height="1.2" fill="#c4c4c4"/><rect x="4" y="0" width="1.2" height="1.2" fill="#c4c4c4"/><rect x="0.5" y="4" width="1.2" height="1.2" fill="#c4c4c4"/><rect x="4" y="4" width="1.2" height="1.2" fill="#c4c4c4"/><rect x="0.5" y="8" width="1.2" height="1.2" fill="#c4c4c4"/><rect x="4" y="8" width="1.2" height="1.2" fill="#c4c4c4"/><rect x="0.5" y="12" width="1.2" height="1.2" fill="#c4c4c4"/><rect x="4" y="12" width="1.2" height="1.2" fill="#c4c4c4"/></svg>
<svg style="left:563px;top:123px;" width="24" height="24" viewBox="0 0 24 24"><path d="M2 2l20 20H2z" fill="#e4e4e4" stroke="#bbb" stroke-width="0.9"/><path d="M6 12l6 6H6z" fill="#f4f4f4" stroke="#bbb" stroke-width="0.8"/><path d="M16 2h6v20" fill="#e0e0e0" stroke="#bbb" stroke-width="0.9"/></svg>
<svg style="left:597px;top:123px;" width="24" height="24" viewBox="0 0 24 24"><g fill="#d8d8d8" stroke="#cfcfcf" stroke-width="0.7"><circle cx="11" cy="3.5" r="2.3"/><circle cx="18" cy="6" r="2.3"/><circle cx="3.5" cy="10" r="2.3"/></g><rect x="12" y="13" width="10" height="10" rx="1.5" fill="#c6c6c6"/><path d="M14 18.0h6M17.5 15.5l2.5 2.5-2.5 2.5" stroke="#f2f2f2" stroke-width="1.8" fill="none"/></svg>
<svg style="left:626.0px;top:132.5px;" width="8" height="5" viewBox="0 0 8 5"><path d="M0 0H8L4.0 5Z" fill="#d8d8d8"/></svg>
<svg style="left:642px;top:123px;" width="24" height="24" viewBox="0 0 24 24"><path d="M3 6c0-3 4-4 8-3s7 0 9 2-1 6-4 6-6 0-9 0-4-2-4-5z" fill="#d2d2d2" stroke="#c4c4c4" stroke-width="1"/><rect x="12" y="13" width="10" height="10" rx="1.5" fill="#c6c6c6"/><path d="M19.5 18.0a2.5 2.5 0 1 1-1-2" stroke="#f2f2f2" stroke-width="1.4" fill="none"/></svg>
<svg style="left:675px;top:123px;" width="24" height="24" viewBox="0 0 24 24"><path d="M3 6c0-3 4-4 8-3s7 0 9 2-1 6-4 6-6 0-9 0-4-2-4-5z" fill="#d2d2d2" stroke="#c4c4c4" stroke-width="1"/><rect x="12" y="13" width="10" height="10" rx="1.5" fill="#c6c6c6"/><path d="M14 18.0h6M17.5 15.5l2.5 2.5-2.5 2.5" stroke="#f2f2f2" stroke-width="1.8" fill="none"/></svg>
<svg style="left:708px;top:123px;" width="24" height="24" viewBox="0 0 24 24"><circle cx="8" cy="8" r="6.5" fill="#dcdcdc" stroke="#cfcfcf"/><path d="M12 9h6l3 5-3 6h-6l-3-6z" fill="#e2e2e2" stroke="#cfcfcf"/><path d="M9 9l5 5" stroke="#c2c2c2"/></svg>
<svg style="left:740px;top:123px;" width="24" height="24" viewBox="0 0 24 24"><path d="M3 6c0-3 4-4 8-3s7 0 9 2-1 6-4 6-6 0-9 0-4-2-4-5z" fill="#d2d2d2" stroke="#c4c4c4" stroke-width="1"/><rect x="12" y="13" width="10" height="10" rx="1.5" fill="#c6c6c6"/><circle cx="17.0" cy="18.0" r="2" fill="none" stroke="#f2f2f2" stroke-width="1.2"/><path d="M17.0 14.5V21.5M13.5 18.0H20.5" stroke="#f2f2f2" stroke-width="0.9"/></svg>
<svg style="left:774px;top:123px;" width="24" height="24" viewBox="0 0 24 24"><path d="M3 6c0-3 4-4 8-3s7 0 9 2-1 6-4 6-6 0-9 0-4-2-4-5z" fill="#d2d2d2" stroke="#c4c4c4" stroke-width="1"/><rect x="12" y="13" width="10" height="10" rx="1.5" fill="#c6c6c6"/><circle cx="17.0" cy="18.0" r="2" fill="none" stroke="#f2f2f2" stroke-width="1.2"/><path d="M17.0 14.5V21.5M13.5 18.0H20.5" stroke="#f2f2f2" stroke-width="0.9"/></svg>
<svg style="left:806px;top:123px;" width="24" height="24" viewBox="0 0 24 24"><path d="M3 6c0-3 4-4 8-3s7 0 9 2-1 6-4 6-6 0-9 0-4-2-4-5z" fill="#d2d2d2" stroke="#c4c4c4" stroke-width="1"/><rect x="12" y="13" width="10" height="10" rx="1.5" fill="#c6c6c6"/><circle cx="17.0" cy="18.0" r="2" fill="none" stroke="#f2f2f2" stroke-width="1.2"/><path d="M17.0 14.5V21.5M13.5 18.0H20.5" stroke="#f2f2f2" stroke-width="0.9"/></svg>
<svg style="left:839px;top:123px;" width="24" height="24" viewBox="0 0 24 24"><path d="M3 6c0-3 4-4 8-3s7 0 9 2-1 6-4 6-6 0-9 0-4-2-4-5z" fill="#d2d2d2" stroke="#c4c4c4" stroke-width="1"/><rect x="12" y="13" width="10" height="10" rx="1.5" fill="#c6c6c6"/><path d="M14.5 15.5l5 5M19.5 15.5l-5 5" stroke="#f2f2f2" stroke-width="1.8"/></svg>
<svg style="left:873px;top:123px;" width="24" height="24" viewBox="0 0 24 24"><path d="M3 6c0-3 4-4 8-3s7 0 9 2-1 6-4 6-6 0-9 0-4-2-4-5z" fill="#d2d2d2" stroke="#c4c4c4" stroke-width="1"/><rect x="12" y="13" width="10" height="10" rx="1.5" fill="#c6c6c6"/><path d="M14.5 15.5l5 5M19.5 15.5l-5 5" stroke="#f2f2f2" stroke-width="1.8"/></svg>
<svg style="left:906px;top:123px;" width="24" height="24" viewBox="0 0 24 24"><path d="M3 5c1-3 5-3 8-2s7-1 9 2 0 6-4 5-4 1-5 5-4 6-6 3-3-9-2-13z" fill="#d2d2d2" stroke="#c4c4c4" stroke-width="1"/></svg>
<svg style="left:939px;top:123px;" width="24" height="24" viewBox="0 0 24 24"><path d="M3 18c-3-4 4-12 9-15s8 2 8 5-5 10-10 12-5 0-7-2z" fill="#d2d2d2" stroke="#c4c4c4" stroke-width="1"/></svg>
<svg style="left:972px;top:123px;" width="24" height="24" viewBox="0 0 24 24"><path d="M3 3l5 12 6-8h7M8 15v0" fill="none" stroke="#d6d6d6" stroke-width="1.3"/><g fill="#f0f0f0" stroke="#d2d2d2"><rect x="1.5" y="1.5" width="3" height="3"/><rect x="7" y="14" width="3" height="3"/><rect x="13" y="6" width="3" height="3"/><rect x="19" y="6" width="3" height="3"/></g><rect x="13" y="13" width="10" height="10" rx="1.5" fill="#c6c6c6"/><path d="M20.5 18.0a2.5 2.5 0 1 1-1-2" stroke="#f2f2f2" stroke-width="1.4" fill="none"/></svg>
<svg style="left:1004px;top:123px;" width="24" height="24" viewBox="0 0 24 24"><path d="M2 12h20M10 2v20M15 8v14" stroke="#d6d6d6" stroke-width="1.3"/><circle cx="10" cy="12" r="2" fill="#f0f0f0" stroke="#d2d2d2"/><circle cx="15" cy="12" r="2" fill="#f0f0f0" stroke="#d2d2d2"/><rect x="16" y="1" width="6" height="6" fill="#e4e4e4" stroke="#d0d0d0"/></svg>
<svg style="left:1038px;top:123px;" width="24" height="24" viewBox="0 0 24 24"><path d="M2 8c0-5 4-6 6-6s3 4 2 8-5 3-7 1z" fill="#d2d2d2" stroke="#c4c4c4" stroke-width="1"/><path d="M13 3c2-2 7-1 8 3s-2 6-6 5-4-5-2-8z" fill="#d2d2d2" stroke="#c4c4c4" stroke-width="1"/><path d="M10 11l-4 10M10 11l6 9" stroke="#d0d0d0" stroke-width="1.3"/><circle cx="6" cy="19" r="2.2" fill="none" stroke="#d0d0d0"/><circle cx="16" cy="19" r="2.2" fill="none" stroke="#d0d0d0"/></svg>
<svg style="left:1070px;top:123px;" width="24" height="24" viewBox="0 0 24 24"><path d="M2 8c0-5 4-6 6-6s3 4 2 8-5 3-7 1z" fill="#d2d2d2" stroke="#c4c4c4" stroke-width="1"/><path d="M13 3c2-2 7-1 8 3s-2 6-6 5-4-5-2-8z" fill="#d2d2d2" stroke="#c4c4c4" stroke-width="1"/><path d="M10 11l-4 10M10 11l6 9" stroke="#d0d0d0" stroke-width="1.3"/><circle cx="6" cy="19" r="2.2" fill="none" stroke="#d0d0d0"/><circle cx="16" cy="19" r="2.2" fill="none" stroke="#d0d0d0"/></svg>
<svg style="left:1104px;top:123px;" width="24" height="24" viewBox="0 0 24 24"><path d="M2 8c0-5 4-6 6-6s3 4 2 8-5 3-7 1z" fill="#d2d2d2" stroke="#c4c4c4" stroke-width="1"/><path d="M13 3c2-2 7-1 8 3s-2 6-6 5-4-5-2-8z" fill="#d2d2d2" stroke="#c4c4c4" stroke-width="1"/><path d="M8 7h8M8 10h8" stroke="#e8e8e8" stroke-width="1.3"/><path d="M6 12c0 4 3 7 6 9" fill="none" stroke="#d0d0d0" stroke-width="1.2"/></svg>
<svg style="left:1138px;top:123px;" width="24" height="24" viewBox="0 0 24 24"><path d="M2 3h20M2 9h20M2 15h20M2 21h20" stroke="#d6d6d6" stroke-width="1.2"/><path d="M8 3v3M14 3v3M8 9v3M14 9v3M8 15v3M14 15v3" stroke="#ccc" stroke-width="1"/></svg>
<svg style="left:1172px;top:123px;" width="24" height="24" viewBox="0 0 24 24"><path d="M10 3v10l9-5z" fill="#dcdcdc" stroke="#cfcfcf"/><path d="M10 13l-5 9h10z" fill="none" stroke="#d0d0d0"/><path d="M7 5a6 6 0 0 0 0 12" fill="none" stroke="#cfcfcf" stroke-width="1.2"/></svg>
<svg style="left:1199.0px;top:132.5px;" width="8" height="5" viewBox="0 0 8 5"><path d="M0 0H8L4.0 5Z" fill="#d8d8d8"/></svg>
<svg style="left:1216px;top:127px;" width="6" height="16" viewBox="0 0 6 16"><rect x="0.5" y="0" width="1.2" height="1.2" fill="#c4c4c4"/><rect x="4" y="0" width="1.2" height="1.2" fill="#c4c4c4"/><rect x="0.5" y="4" width="1.2" height="1.2" fill="#c4c4c4"/><rect x="4" y="4" width="1.2" height="1.2" fill="#c4c4c4"/><rect x="0.5" y="8" width="1.2" height="1.2" fill="#c4c4c4"/><rect x="4" y="8" width="1.2" height="1.2" fill="#c4c4c4"/><rect x="0.5" y="12" width="1.2" height="1.2" fill="#c4c4c4"/><rect x="4" y="12" width="1.2" height="1.2" fill="#c4c4c4"/></svg>
<svg style="left:1232px;top:123px;" width="24" height="24" viewBox="0 0 24 24"><path d="M3 20l3-14 6-4 4 2-6 16z M9 20l3-14 6-4 4 2-6 16z" fill="#dedede" stroke="#d0d0d0" stroke-width="0.8"/></svg>
<svg style="left:1249.0px;top:142.5px;" width="8" height="5" viewBox="0 0 8 5"><path d="M0 0H8L4.0 5Z" fill="#d8d8d8"/></svg>
<svg style="left:1265px;top:123px;" width="24" height="24" viewBox="0 0 24 24"><path d="M4 22.5l0.8-6.5L15.5 1.5l4.2 2.6L9 18.8z" fill="#f0d828" stroke="#6a5a10" stroke-width="0.9"/><path d="M4 22.5l0.8-6.5 4.2 2.8z" fill="#666"/><path d="M15 2.2l4.2 2.6 1-1.6-4.2-2.6z" fill="#eee" stroke="#888" stroke-width="0.6"/><path d="M7 16.5L17 3" stroke="#c8b010" stroke-width="0.8"/></svg>
<svg style="left:1297px;top:123px;" width="24" height="24" viewBox="0 0 24 24"><rect x="2" y="2" width="18" height="19" rx="2" fill="#dadada"/><rect x="5" y="3" width="12" height="7" fill="#eeeeee"/><path d="M6 5h10M6 7h10" stroke="#cfcfcf" stroke-width="0.8"/><rect x="6" y="13" width="10" height="7" fill="#eee"/></svg>
<svg style="left:1330px;top:123px;" width="24" height="24" viewBox="0 0 24 24"><path d="M4 20L19 4" stroke="#d6d6d6" stroke-width="1" stroke-dasharray="1.5 1.5"/><rect x="2" y="18" width="3.5" height="3.5" fill="#f0f0f0" stroke="#d2d2d2"/><rect x="17.5" y="2.5" width="3.5" height="3.5" fill="#f0f0f0" stroke="#d2d2d2"/></svg>
<svg style="left:1359.0px;top:132.5px;" width="8" height="5" viewBox="0 0 8 5"><path d="M0 0H8L4.0 5Z" fill="#d8d8d8"/></svg>
<svg style="left:1374px;top:123px;" width="24" height="24" viewBox="0 0 24 24"><g fill="#d8d8d8" stroke="#cfcfcf" stroke-width="0.7"><circle cx="10" cy="3.5" r="2.3"/><circle cx="18" cy="6" r="2.3"/><circle cx="3.5" cy="10" r="2.3"/></g><rect x="12" y="13" width="10" height="10" rx="1.5" fill="#c6c6c6"/><circle cx="17.0" cy="18.0" r="2" fill="none" stroke="#f2f2f2" stroke-width="1.2"/><path d="M17.0 14.5V21.5M13.5 18.0H20.5" stroke="#f2f2f2" stroke-width="0.9"/></svg>
<svg style="left:1409px;top:123px;" width="24" height="24" viewBox="0 0 24 24"><rect x="2" y="2" width="5" height="5" fill="#f0f0f0" stroke="#ccc"/><path d="M8 4.5h12M3 22l3-15" stroke="#d0d0d0" stroke-width="1.2"/><path d="M9 20l10-10M11 10l9 10" stroke="#d6d6d6" stroke-width="3"/></svg>
<svg style="left:1436.0px;top:132.5px;" width="8" height="5" viewBox="0 0 8 5"><path d="M0 0H8L4.0 5Z" fill="#d8d8d8"/></svg>
<svg style="left:1453px;top:123px;" width="24" height="24" viewBox="0 0 24 24"><rect x="2" y="3" width="18" height="5" fill="#dedede" stroke="#d2d2d2"/><rect x="2" y="10" width="18" height="5" fill="#dedede" stroke="#d2d2d2"/><rect x="2" y="17" width="18" height="5" fill="#dedede" stroke="#d2d2d2"/><path d="M9 23L21 3" stroke="#cfcfcf" stroke-width="2.4"/></svg>
<svg style="left:1486px;top:123px;" width="24" height="24" viewBox="0 0 24 24"><rect x="2" y="2" width="14" height="8" fill="#e6e6e6" stroke="#d4d4d4"/><rect x="5" y="8" width="15" height="15" fill="#e0d8d8" stroke="#d0c8c8"/><path d="M9 10v11M13 10v11M17 10v11" stroke="#d0c8c8"/></svg>
<svg style="left:1518px;top:123px;" width="24" height="24" viewBox="0 0 24 24"><path d="M1 10l16 6M1 14l16-6" stroke="#d0d0d0" stroke-width="1.5"/><circle cx="20" cy="7" r="3" fill="none" stroke="#cfcfcf" stroke-width="1.5"/><circle cx="20" cy="17" r="3" fill="none" stroke="#cfcfcf" stroke-width="1.5"/></svg>
<svg style="left:1553px;top:123px;" width="24" height="24" viewBox="0 0 24 24"><path d="M8 2h9l3 3v13H8z" fill="#f2f2f2" stroke="#cfcfcf"/><path d="M3 6h9l3 3v13H3z" fill="#f2f2f2" stroke="#cfcfcf"/><path d="M5 12h8M5 15h8M5 18h8" stroke="#d6d6d6"/></svg>
<svg style="left:1587px;top:123px;" width="24" height="24" viewBox="0 0 24 24"><rect x="3" y="3" width="17" height="19" rx="1.5" fill="#e6e6e6" stroke="#cfcfcf"/><rect x="6" y="6" width="11" height="14" fill="#f4f4f4" stroke="#d6d6d6"/><path d="M8 10h7M8 13h7M8 16h7" stroke="#d6d6d6"/></svg>
<svg style="left:1619px;top:123px;" width="24" height="24" viewBox="0 0 24 24"><path d="M8 3L1 10l7 7v-4c5 0 9 1 11 6 0-7-4-11-11-11z" fill="#d6d6d6"/></svg>
<svg style="left:1652px;top:123px;" width="24" height="24" viewBox="0 0 24 24"><path d="M16 3l7 7-7 7v-4c-5 0-9 1-11 6 0-7 4-11 11-11z" fill="#d6d6d6"/></svg>
<svg style="left:1685px;top:127px;" width="6" height="16" viewBox="0 0 6 16"><rect x="0.5" y="0" width="1.2" height="1.2" fill="#c4c4c4"/><rect x="4" y="0" width="1.2" height="1.2" fill="#c4c4c4"/><rect x="0.5" y="4" width="1.2" height="1.2" fill="#c4c4c4"/><rect x="4" y="4" width="1.2" height="1.2" fill="#c4c4c4"/><rect x="0.5" y="8" width="1.2" height="1.2" fill="#c4c4c4"/><rect x="4" y="8" width="1.2" height="1.2" fill="#c4c4c4"/><rect x="0.5" y="12" width="1.2" height="1.2" fill="#c4c4c4"/><rect x="4" y="12" width="1.2" height="1.2" fill="#c4c4c4"/></svg>
<svg style="left:1699px;top:123px;" width="24" height="24" viewBox="0 0 24 24"><path d="M3 21V11c0-5 4-8 9-8h8" fill="none" stroke="#d6d6d6" stroke-width="1.2"/><g fill="#f0f0f0" stroke="#d2d2d2"><rect x="1.5" y="19" width="3" height="3"/><rect x="5" y="5" width="3" height="3"/><rect x="19" y="2" width="3" height="3"/></g><rect x="13" y="13" width="10" height="10" rx="1.5" fill="#c6c6c6"/><circle cx="18.0" cy="18.0" r="2" fill="none" stroke="#f2f2f2" stroke-width="1.2"/><path d="M18.0 14.5V21.5M14.5 18.0H21.5" stroke="#f2f2f2" stroke-width="0.9"/></svg>
<svg style="left:1732px;top:123px;" width="24" height="24" viewBox="0 0 24 24"><circle cx="9" cy="9" r="7" fill="none" stroke="#d8d8d8" stroke-width="1.5"/><rect x="7.5" y="7.5" width="3" height="3" fill="#d0d0d0"/><rect x="13" y="13" width="10" height="10" rx="1.5" fill="#c6c6c6"/><circle cx="18.0" cy="18.0" r="2" fill="none" stroke="#f2f2f2" stroke-width="1.2"/><path d="M18.0 14.5V21.5M14.5 18.0H21.5" stroke="#f2f2f2" stroke-width="0.9"/></svg>
<svg style="left:1762.0px;top:132.5px;" width="8" height="5" viewBox="0 0 8 5"><path d="M0 0H8L4.0 5Z" fill="#d8d8d8"/></svg>
<svg style="left:1777px;top:123px;" width="24" height="24" viewBox="0 0 24 24"><ellipse cx="10" cy="10" rx="8" ry="5" fill="none" stroke="#d8d8d8" stroke-width="1.5" transform="rotate(-20 10 10)"/><rect x="8.5" y="8.5" width="3" height="3" fill="#d0d0d0"/><rect x="13" y="13" width="10" height="10" rx="1.5" fill="#c6c6c6"/><circle cx="18.0" cy="18.0" r="2" fill="none" stroke="#f2f2f2" stroke-width="1.2"/><path d="M18.0 14.5V21.5M14.5 18.0H21.5" stroke="#f2f2f2" stroke-width="0.9"/></svg>
<svg style="left:1807.0px;top:132.5px;" width="8" height="5" viewBox="0 0 8 5"><path d="M0 0H8L4.0 5Z" fill="#d8d8d8"/></svg>
<svg style="left:1823px;top:123px;" width="24" height="24" viewBox="0 0 24 24"><rect x="3" y="3" width="16" height="13" fill="none" stroke="#d8d8d8" stroke-width="1.5"/><g fill="#f0f0f0" stroke="#d2d2d2"><rect x="1.5" y="1.5" width="3" height="3"/><rect x="17.5" y="1.5" width="3" height="3"/></g><rect x="13" y="13" width="10" height="10" rx="1.5" fill="#c6c6c6"/><circle cx="18.0" cy="18.0" r="2" fill="none" stroke="#f2f2f2" stroke-width="1.2"/><path d="M18.0 14.5V21.5M14.5 18.0H21.5" stroke="#f2f2f2" stroke-width="0.9"/></svg>
<svg style="left:1852.0px;top:132.5px;" width="8" height="5" viewBox="0 0 8 5"><path d="M0 0H8L4.0 5Z" fill="#d8d8d8"/></svg>
<svg style="left:1868px;top:123px;" width="24" height="24" viewBox="0 0 24 24"><path d="M10 2l9 4 1 9-9 4-8-6z" fill="none" stroke="#d8d8d8" stroke-width="1.5"/><rect x="13" y="13" width="10" height="10" rx="1.5" fill="#c6c6c6"/><circle cx="18.0" cy="18.0" r="2" fill="none" stroke="#f2f2f2" stroke-width="1.2"/><path d="M18.0 14.5V21.5M14.5 18.0H21.5" stroke="#f2f2f2" stroke-width="0.9"/></svg>
<svg style="left:1897.0px;top:132.5px;" width="8" height="5" viewBox="0 0 8 5"><path d="M0 0H8L4.0 5Z" fill="#d8d8d8"/></svg>
<svg style="left:18px;top:166px;" width="6" height="16" viewBox="0 0 6 16"><rect x="0.5" y="0" width="1.2" height="1.2" fill="#c4c4c4"/><rect x="4" y="0" width="1.2" height="1.2" fill="#c4c4c4"/><rect x="0.5" y="4" width="1.2" height="1.2" fill="#c4c4c4"/><rect x="4" y="4" width="1.2" height="1.2" fill="#c4c4c4"/><rect x="0.5" y="8" width="1.2" height="1.2" fill="#c4c4c4"/><rect x="4" y="8" width="1.2" height="1.2" fill="#c4c4c4"/><rect x="0.5" y="12" width="1.2" height="1.2" fill="#c4c4c4"/><rect x="4" y="12" width="1.2" height="1.2" fill="#c4c4c4"/></svg>
<svg style="left:31px;top:162px;" width="24" height="24" viewBox="0 0 24 24"><path d="M4 8l4-4 4 4 4-4 4 4-4 4 4 4-4 4-4-4-4 4-4-4 4-4z" fill="none" stroke="#d8d8d8" stroke-width="1.3"/></svg>
<div style="left:64px;top:160px;width:172px;height:31px;background:#f4f4f4;border:1px solid #d2d2d2;border-radius:3px;box-sizing:border-box"></div>
<div class="t" style="left:69.5px;top:168.5px;font-size:16px;line-height:16px;color:#bcbcbc;font-weight:normal;font-style:normal;font-family:'Liberation Sans';transform:scaleX(1.0614);transform-origin:0 0;">No filter geometry set</div>
<div style="left:242px;top:160px;width:32px;height:30px;background:#e2e2e2;border:1px solid #d0d0d0;border-radius:3px;box-sizing:border-box"></div>
<svg style="left:246px;top:162px;" width="24" height="24" viewBox="0 0 24 24"><path d="M2 12c5-7 15-7 20 0-5 7-15 7-20 0z" fill="none" stroke="#b8b8b8" stroke-width="1"/><circle cx="12" cy="11.5" r="3.5" fill="#aaa"/><circle cx="11" cy="10.5" r="1" fill="#ddd"/></svg>
<svg style="left:283px;top:162px;" width="24" height="24" viewBox="0 0 24 24"><path d="M2 4h8M2 4v11" stroke="#cfcfcf" stroke-dasharray="1.5 1.5"/><path d="M9.96 14.04L2.5 21.5" stroke="#333" stroke-width="0" /><path d="M9.46 14.54L3 21" stroke="#d6d6d6" stroke-width="3.6" stroke-linecap="butt"/><path d="M9.46 14.54L3 21" stroke="#ccc" stroke-width="0.6" stroke-dasharray="0"/><circle cx="15" cy="9" r="7" fill="#f0f0f0" stroke="#cfcfcf" stroke-width="1.3"/></svg>
<div style="left:322.5px;top:168px;width:25px;height:17px;background:#0000ff;border:1px solid #111;box-sizing:border-box"></div>
<svg style="left:356.0px;top:173.5px;" width="8" height="5" viewBox="0 0 8 5"><path d="M0 0H8L4.0 5Z" fill="#444"/></svg>
<div style="left:375px;top:164px;width:1px;height:24px;background:#d4d4d4"></div>
<svg style="left:388px;top:162px;" width="24" height="24" viewBox="0 0 24 24"><rect x="2" y="3" width="16" height="16" fill="#cde4f8" stroke="#88a8c8" stroke-width="0.9"/><rect x="14" y="14" width="10" height="10" rx="2" fill="#4e9a4e" stroke="#2f6f2f" stroke-width="0.6"/><path d="M19.0 16.2V21.8M16.2 19.0H21.8" stroke="#fff" stroke-width="2.2"/></svg>
<svg style="left:423px;top:162px;" width="24" height="24" viewBox="0 0 24 24"><circle cx="8" cy="8" r="7" fill="#5a86b8" stroke="#3a5a80" stroke-width="0.8"/><circle cx="6" cy="19" r="4" fill="#2a4a6a"/><circle cx="17" cy="16" r="4" fill="#2a4a6a"/><path d="M19 2l2 2-2 2-2-2z" fill="#fff" stroke="#555" stroke-width="0.7"/><rect x="14" y="14" width="10" height="10" rx="2" fill="#4e9a4e" stroke="#2f6f2f" stroke-width="0.6"/><path d="M19.0 16.2V21.8M16.2 19.0H21.8" stroke="#fff" stroke-width="2.2"/></svg>
<svg style="left:458px;top:162px;" width="24" height="24" viewBox="0 0 24 24"><path d="M4 3L20 2 14 19 4 15z" fill="none" stroke="#333" stroke-width="1.2"/><g fill="#3a7ae0"><circle cx="4" cy="3" r="2.4"/><circle cx="20" cy="2.5" r="2.4"/><circle cx="14" cy="19" r="2.4"/><circle cx="4" cy="15" r="2.4"/></g><rect x="14" y="14" width="10" height="10" rx="2" fill="#4e9a4e" stroke="#2f6f2f" stroke-width="0.6"/><path d="M19.0 16.2V21.8M16.2 19.0H21.8" stroke="#fff" stroke-width="2.2"/></svg>
<div style="left:496px;top:164px;width:1px;height:24px;background:#d4d4d4"></div>
<svg style="left:516px;top:162px;" width="24" height="24" viewBox="0 0 24 24"><path d="M4 5l14 14" stroke="#cfcfcf" stroke-width="4"/><circle cx="5" cy="5" r="4" fill="none" stroke="#d2d2d2" stroke-width="2"/></svg>
<svg style="left:540.0px;top:172.5px;" width="8" height="5" viewBox="0 0 8 5"><path d="M0 0H8L4.0 5Z" fill="#d8d8d8"/></svg>
<svg style="left:561px;top:162px;" width="24" height="24" viewBox="0 0 24 24"><g fill="none" stroke="#d0d0d0" stroke-width="1.2"><rect x="2" y="2" width="4" height="4"/><rect x="2" y="10" width="4" height="4"/><rect x="2" y="18" width="4" height="4"/></g><path d="M9 4h9M9 12h12M9 20h7" stroke="#e0e0e0" stroke-width="2"/></svg>
<svg style="left:597px;top:162px;" width="24" height="24" viewBox="0 0 24 24"><rect x="1.5" y="1.5" width="21" height="21" fill="#fff" stroke="#888" stroke-width="1"/><rect x="2" y="2" width="20" height="4" fill="#ddd"/><path d="M5 7v13M5 11h3M5 18h3" stroke="#888" stroke-width="0.8" fill="none"/><rect x="8" y="9" width="4" height="4" fill="#3a78d0"/><rect x="8" y="16" width="4" height="4" fill="#3a78d0"/><path d="M14 10h5M14 12h4M14 17h5" stroke="#888" stroke-width="0.8"/></svg>
<svg style="left:633px;top:166px;" width="6" height="16" viewBox="0 0 6 16"><rect x="0.5" y="0" width="1.2" height="1.2" fill="#c4c4c4"/><rect x="4" y="0" width="1.2" height="1.2" fill="#c4c4c4"/><rect x="0.5" y="4" width="1.2" height="1.2" fill="#c4c4c4"/><rect x="4" y="4" width="1.2" height="1.2" fill="#c4c4c4"/><rect x="0.5" y="8" width="1.2" height="1.2" fill="#c4c4c4"/><rect x="4" y="8" width="1.2" height="1.2" fill="#c4c4c4"/><rect x="0.5" y="12" width="1.2" height="1.2" fill="#c4c4c4"/><rect x="4" y="12" width="1.2" height="1.2" fill="#c4c4c4"/></svg>
<svg style="left:647px;top:162px;" width="24" height="24" viewBox="0 0 24 24"><path d="M2 4h20M16 4c-2 8-6 13-11 16" fill="none" stroke="#333" stroke-width="1.3"/></svg>
<svg style="left:680px;top:162px;" width="24" height="24" viewBox="0 0 24 24"><path d="M2 4h6" stroke="#555" stroke-width="1.8"/><path d="M8 4h7" stroke="#5a5ad0" stroke-width="1.8"/><path d="M15 4h7" stroke="#e05a5a" stroke-width="1.8"/><path d="M2 12h7" stroke="#3ac03a" stroke-width="1.8"/><path d="M9 12h6" stroke="#30c0c0" stroke-width="1.8"/><path d="M15 12h7" stroke="#c030c0" stroke-width="1.8"/><path d="M2 19h7" stroke="#e090d0" stroke-width="1.8"/><path d="M9 19h5" stroke="#f0d060" stroke-width="1.8"/><path d="M14 19h8" stroke="#e0a060" stroke-width="1.8"/></svg>
<svg style="left:713px;top:162px;" width="24" height="24" viewBox="0 0 24 24"><path d="M2 4h20" stroke="#333" stroke-width="1.3"/><path d="M17 4c-2 8-6 13-12 17" fill="none" stroke="#222" stroke-width="1.2"/><g fill="#e02020"><circle cx="16" cy="7" r="1.8"/><circle cx="13" cy="13" r="1.8"/><circle cx="8" cy="18" r="1.8"/></g></svg>
<svg style="left:746px;top:162px;" width="24" height="24" viewBox="0 0 24 24"><path d="M2 3h20M7 3L4 20M13 3l-3 17M19 3l-3 17" fill="none" stroke="#222" stroke-width="1.3"/></svg>
<div style="left:778px;top:164px;width:1px;height:24px;background:#d4d4d4"></div>
<svg style="left:786px;top:162px;" width="24" height="24" viewBox="0 0 24 24"><path d="M2 12c0-5 3-7 8-7h6V1l7 6-7 6V9h-6c-3 0-5 1-5 3z" fill="#f0901a" stroke="#b86a10" stroke-width="0.5"/><path d="M22 12c0 5-3 7-8 7H8v4l-7-6 7-6v4h6c3 0 5-1 5-3z" fill="#3ab83a" stroke="#208a20" stroke-width="0.5"/></svg>
<svg style="left:820px;top:162px;" width="24" height="24" viewBox="0 0 24 24"><rect x="1.5" y="1.5" width="9" height="21" fill="#fff" stroke="#555" stroke-width="0.8"/><g fill="#222"><rect x="11" y="2" width="4" height="4"/><rect x="15" y="6" width="4" height="4"/><rect x="11" y="10" width="4" height="4"/><rect x="15" y="14" width="4" height="4"/><rect x="11" y="18" width="4" height="4"/><rect x="19" y="2" width="3" height="4"/><rect x="19" y="10" width="3" height="4"/><rect x="19" y="18" width="3" height="4"/></g><path d="M6 9l5 3-5 3" fill="none" stroke="#e02020" stroke-width="1.8"/></svg>
<svg style="left:853px;top:162px;" width="24" height="24" viewBox="0 0 24 24"><rect x="1.5" y="1.5" width="9" height="21" fill="#000"/><g fill="#222"><rect x="11" y="2" width="4" height="4"/><rect x="15" y="6" width="4" height="4"/><rect x="11" y="10" width="4" height="4"/><rect x="15" y="14" width="4" height="4"/><rect x="11" y="18" width="4" height="4"/><rect x="19" y="2" width="3" height="4"/><rect x="19" y="10" width="3" height="4"/><rect x="19" y="18" width="3" height="4"/></g><path d="M6 9l5 3-5 3" fill="none" stroke="#e02020" stroke-width="1.8"/></svg>
<svg style="left:888px;top:166px;" width="6" height="16" viewBox="0 0 6 16"><rect x="0.5" y="0" width="1.2" height="1.2" fill="#c4c4c4"/><rect x="4" y="0" width="1.2" height="1.2" fill="#c4c4c4"/><rect x="0.5" y="4" width="1.2" height="1.2" fill="#c4c4c4"/><rect x="4" y="4" width="1.2" height="1.2" fill="#c4c4c4"/><rect x="0.5" y="8" width="1.2" height="1.2" fill="#c4c4c4"/><rect x="4" y="8" width="1.2" height="1.2" fill="#c4c4c4"/><rect x="0.5" y="12" width="1.2" height="1.2" fill="#c4c4c4"/><rect x="4" y="12" width="1.2" height="1.2" fill="#c4c4c4"/></svg>
<svg style="left:900px;top:162px;" width="24" height="24" viewBox="0 0 24 24"><circle cx="12" cy="6" r="4.2" fill="none" stroke="#8aaa30" stroke-width="2.2"/><circle cx="12.5" cy="6" r="1.3" fill="#f0a030"/><path d="M14 8l3 3" stroke="#8aaa30" stroke-width="2.2"/><text x="1" y="23" font-size="12" font-weight="bold" font-family="Liberation Sans" fill="#8aaa30">hub</text></svg>
<svg style="left:937px;top:166px;" width="6" height="16" viewBox="0 0 6 16"><rect x="0.5" y="0" width="1.2" height="1.2" fill="#c4c4c4"/><rect x="4" y="0" width="1.2" height="1.2" fill="#c4c4c4"/><rect x="0.5" y="4" width="1.2" height="1.2" fill="#c4c4c4"/><rect x="4" y="4" width="1.2" height="1.2" fill="#c4c4c4"/><rect x="0.5" y="8" width="1.2" height="1.2" fill="#c4c4c4"/><rect x="4" y="8" width="1.2" height="1.2" fill="#c4c4c4"/><rect x="0.5" y="12" width="1.2" height="1.2" fill="#c4c4c4"/><rect x="4" y="12" width="1.2" height="1.2" fill="#c4c4c4"/></svg>
<svg style="left:949px;top:162px;" width="24" height="24" viewBox="0 0 24 24"><rect x="1" y="1" width="23" height="23" fill="#5cb85c"/><path d="M1 1h23L1 24z" fill="#7cc87c" opacity="0.5"/><circle cx="14" cy="10" r="6" fill="none" stroke="#fff" stroke-width="2"/><path d="M10 14l-7 7" stroke="#fff" stroke-width="2.5"/></svg>
<svg style="left:983px;top:162px;" width="24" height="24" viewBox="0 0 24 24"><rect x="1" y="2" width="22" height="21" fill="#f0d050"/><path d="M1 10h6v6H1z M9 6h4v8H9z" fill="#c8a020"/><path d="M3 18c4-2 6 0 10-3s6-1 9 2v6H1z" fill="#5a8ad0"/><path d="M9 16l14-14" stroke="#7a4a20" stroke-width="2.4"/><path d="M1 2h5v5H1z" fill="#4ab04a"/></svg>
<svg style="left:1019px;top:166px;" width="6" height="16" viewBox="0 0 6 16"><rect x="0.5" y="0" width="1.2" height="1.2" fill="#c4c4c4"/><rect x="4" y="0" width="1.2" height="1.2" fill="#c4c4c4"/><rect x="0.5" y="4" width="1.2" height="1.2" fill="#c4c4c4"/><rect x="4" y="4" width="1.2" height="1.2" fill="#c4c4c4"/><rect x="0.5" y="8" width="1.2" height="1.2" fill="#c4c4c4"/><rect x="4" y="8" width="1.2" height="1.2" fill="#c4c4c4"/><rect x="0.5" y="12" width="1.2" height="1.2" fill="#c4c4c4"/><rect x="4" y="12" width="1.2" height="1.2" fill="#c4c4c4"/></svg>
<svg style="left:1032px;top:162px;" width="24" height="24" viewBox="0 0 24 24"><rect x="0.5" y="1" width="23" height="14" rx="4" fill="#4a80c0"/><text x="2.5" y="12" font-size="9" font-weight="bold" font-family="Liberation Sans" fill="#fff">KML</text><rect x="14" y="14" width="9" height="9" rx="2" fill="#4e9a4e" stroke="#2f6f2f" stroke-width="0.6"/><path d="M18.5 16.2V20.8M16.2 18.5H20.8" stroke="#fff" stroke-width="2.2"/></svg>
<svg style="left:1065px;top:162px;" width="24" height="24" viewBox="0 0 24 24"><rect x="0.5" y="1" width="23" height="14" rx="4" fill="#4a80c0"/><text x="2" y="12" font-size="9" font-weight="bold" font-family="Liberation Sans" fill="#fff">KMZ</text><rect x="14" y="14" width="10" height="10" rx="1.5" fill="#3a4a5a"/><path d="M16 17v4M16 19h6M20 17l2 2-2 2" fill="none" stroke="#fff" stroke-width="1.2"/></svg>
<svg style="left:1098px;top:162px;" width="24" height="24" viewBox="0 0 24 24"><rect x="0" y="1" width="24" height="14" rx="4" fill="#4a80c0"/><text x="0.8" y="12" font-size="8" font-weight="bold" font-family="Liberation Sans" fill="#fff">HTML</text><rect x="14" y="14" width="10" height="10" rx="2" fill="#d4aa00"/><path d="M19.0 15.6V22.4M16.04 17.30L21.96 20.70M16.04 20.70L21.96 17.30" stroke="#fff" stroke-width="1.3"/><circle cx="19.0" cy="19.0" r="1.5" fill="#d4aa00" stroke="#fff" stroke-width="0.9"/></svg>
<svg style="left:1131px;top:162px;" width="24" height="24" viewBox="0 0 24 24"><rect x="1" y="2" width="10" height="10" fill="#40d040" stroke="#2a3a2a" stroke-width="0.8"/><rect x="13" y="2" width="10" height="10" fill="#e0c840" stroke="#2a3a2a" stroke-width="0.8"/><rect x="1" y="13" width="10" height="10" fill="#3a80d0" stroke="#2a3a2a" stroke-width="0.8"/><rect x="13" y="13" width="10" height="10" fill="#1a6a2a" stroke="#2a3a2a" stroke-width="0.8"/><rect x="7" y="8" width="9" height="9" fill="#b86a30" stroke="#2a3a2a" stroke-width="0.8"/></svg>
<svg style="left:1164px;top:162px;" width="24" height="24" viewBox="0 0 24 24"><path d="M1 4l21-2 1 20-21 2z" fill="#c8e8b0" stroke="#222" stroke-width="1.4"/><path d="M4 8h5M12 7h7M4 14h6M13 13h6M5 19h5M13 18h6" stroke="#5ab0c0" stroke-width="1"/><path d="M8 3l10 19" stroke="#fff" stroke-width="1.5"/></svg>
<svg style="left:1200px;top:166px;" width="6" height="16" viewBox="0 0 6 16"><rect x="0.5" y="0" width="1.2" height="1.2" fill="#c4c4c4"/><rect x="4" y="0" width="1.2" height="1.2" fill="#c4c4c4"/><rect x="0.5" y="4" width="1.2" height="1.2" fill="#c4c4c4"/><rect x="4" y="4" width="1.2" height="1.2" fill="#c4c4c4"/><rect x="0.5" y="8" width="1.2" height="1.2" fill="#c4c4c4"/><rect x="4" y="8" width="1.2" height="1.2" fill="#c4c4c4"/><rect x="0.5" y="12" width="1.2" height="1.2" fill="#c4c4c4"/><rect x="4" y="12" width="1.2" height="1.2" fill="#c4c4c4"/></svg>
<svg style="left:24px;top:202px;" width="22" height="4" viewBox="0 0 22 4"><circle cx="1.0" cy="1" r="0.75" fill="#b8b8b8"/><circle cx="1.0" cy="3.5" r="0.75" fill="#b8b8b8"/><circle cx="4.5" cy="1" r="0.75" fill="#b8b8b8"/><circle cx="4.5" cy="3.5" r="0.75" fill="#b8b8b8"/><circle cx="8.0" cy="1" r="0.75" fill="#b8b8b8"/><circle cx="8.0" cy="3.5" r="0.75" fill="#b8b8b8"/><circle cx="11.5" cy="1" r="0.75" fill="#b8b8b8"/><circle cx="11.5" cy="3.5" r="0.75" fill="#b8b8b8"/><circle cx="15.0" cy="1" r="0.75" fill="#b8b8b8"/><circle cx="15.0" cy="3.5" r="0.75" fill="#b8b8b8"/><circle cx="18.5" cy="1" r="0.75" fill="#b8b8b8"/><circle cx="18.5" cy="3.5" r="0.75" fill="#b8b8b8"/></svg>
<svg style="left:22px;top:212px;" width="24" height="24" viewBox="0 0 24 24"><path d="M2 13l8-7 7 5-8 7z" fill="#e86a30" stroke="#b04a20" stroke-width="0.6"/><path d="M4 11l7-7 7 5-7 7z" fill="#f0c030" stroke="#c09020" stroke-width="0.6"/><rect x="9" y="1" width="12" height="12" fill="#5b8ec7" stroke="#3d6ea8" stroke-width="0.7" transform="rotate(10 15 7)"/><rect x="14" y="14" width="10" height="10" rx="2" fill="#4e9a4e" stroke="#2f6f2f" stroke-width="0.6"/><path d="M19.0 16.2V21.8M16.2 19.0H21.8" stroke="#fff" stroke-width="2.2"/></svg>
<svg style="left:22px;top:244px;" width="24" height="24" viewBox="0 0 24 24"><path d="M2 10l10 4v9L2 19z" fill="#e8c830" stroke="#444" stroke-width="0.6"/><path d="M12 14l10-4v9l-10 4z" fill="#f4dc50" stroke="#444" stroke-width="0.6"/><circle cx="12" cy="8" r="7" fill="#6a9ad8" stroke="#2a5a9a" stroke-width="0.8"/><path d="M8 5c2 0 3 2 5 1s3 2 2 4-3 0-4 2-3-1-3-3z" fill="#2a5aa0"/><rect x="14" y="14" width="10" height="10" rx="2" fill="#d4aa00"/><path d="M19.0 15.6V22.4M16.04 17.30L21.96 20.70M16.04 20.70L21.96 17.30" stroke="#fff" stroke-width="1.3"/><circle cx="19.0" cy="19.0" r="1.5" fill="#d4aa00" stroke="#fff" stroke-width="0.9"/></svg>
<svg style="left:22px;top:276px;" width="24" height="24" viewBox="0 0 24 24"><path d="M2 3l8 17 6-16 6-1" fill="none" stroke="#222" stroke-width="1.3"/><g fill="#fff" stroke="#222" stroke-width="0.9"><path d="M2 1l2 2-2 2-2-2z"/><circle cx="10" cy="20" r="2"/><path d="M16 2l2 2-2 2-2-2z"/><path d="M22 1l2 2-2 2-2-2z"/></g><rect x="14" y="14" width="10" height="10" rx="2" fill="#d4aa00"/><path d="M19.0 15.6V22.4M16.04 17.30L21.96 20.70M16.04 20.70L21.96 17.30" stroke="#fff" stroke-width="1.3"/><circle cx="19.0" cy="19.0" r="1.5" fill="#d4aa00" stroke="#fff" stroke-width="0.9"/></svg>
<svg style="left:22px;top:308px;" width="24" height="24" viewBox="0 0 24 24"><path d="M2 22C4 14 10 4 22 2c0 6-6 14-14 16" fill="#6a96cc" stroke="#3a6a9a" stroke-width="0.8"/><path d="M2 22L16 8" stroke="#fff" stroke-width="0.8"/><rect x="14" y="14" width="10" height="10" rx="2" fill="#d4aa00"/><path d="M19.0 15.6V22.4M16.04 17.30L21.96 20.70M16.04 20.70L21.96 17.30" stroke="#fff" stroke-width="1.3"/><circle cx="19.0" cy="19.0" r="1.5" fill="#d4aa00" stroke="#fff" stroke-width="0.9"/></svg>
<svg style="left:22px;top:340px;" width="24" height="24" viewBox="0 0 24 24"><rect x="2" y="6" width="18" height="11" rx="2" fill="#5b8ec7" stroke="#3d6ea8" stroke-width="0.8"/><path d="M5 2v4M9 2v4M13 2v4M17 2v4M5 17v4M9 17v4M13 17v3" stroke="#333" stroke-width="1"/><rect x="14" y="14" width="10" height="10" rx="2" fill="#d4aa00"/><path d="M19.0 15.6V22.4M16.04 17.30L21.96 20.70M16.04 20.70L21.96 17.30" stroke="#fff" stroke-width="1.3"/><circle cx="19.0" cy="19.0" r="1.5" fill="#d4aa00" stroke="#fff" stroke-width="0.9"/></svg>
<svg style="left:22px;top:372px;" width="24" height="24" viewBox="0 0 24 24"><rect x="1" y="1" width="21" height="21" fill="#6a96cc" stroke="#2a4a7a" stroke-width="1"/><path d="M11.5 1v21M1 11.5h21M1 1l10.5 10.5M11.5 1L1 11.5M22 1l-10.5 10.5" stroke="#2a4a7a" stroke-width="0.9"/><rect x="2" y="2" width="9" height="9" fill="#9ab8dc" opacity="0.6"/><rect x="14" y="14" width="10" height="10" rx="2" fill="#d4aa00"/><path d="M19.0 15.6V22.4M16.04 17.30L21.96 20.70M16.04 20.70L21.96 17.30" stroke="#fff" stroke-width="1.3"/><circle cx="19.0" cy="19.0" r="1.5" fill="#d4aa00" stroke="#fff" stroke-width="0.9"/></svg>
<svg style="left:22px;top:404px;" width="24" height="24" viewBox="0 0 24 24"><rect x="1" y="1" width="21" height="21" rx="2" fill="#b8cce4" stroke="#5a7aa0" stroke-width="1"/><path d="M2 2l8 16 10-16" fill="none" stroke="#333" stroke-width="1.3"/><circle cx="10" cy="18" r="2" fill="#fff" stroke="#333"/><rect x="14" y="14" width="10" height="10" rx="2" fill="#d4aa00"/><path d="M19.0 15.6V22.4M16.04 17.30L21.96 20.70M16.04 20.70L21.96 17.30" stroke="#fff" stroke-width="1.3"/><circle cx="19.0" cy="19.0" r="1.5" fill="#d4aa00" stroke="#fff" stroke-width="0.9"/></svg>
<svg style="left:24px;top:441px;" width="22" height="4" viewBox="0 0 22 4"><circle cx="1.0" cy="1" r="0.75" fill="#b8b8b8"/><circle cx="1.0" cy="3.5" r="0.75" fill="#b8b8b8"/><circle cx="4.5" cy="1" r="0.75" fill="#b8b8b8"/><circle cx="4.5" cy="3.5" r="0.75" fill="#b8b8b8"/><circle cx="8.0" cy="1" r="0.75" fill="#b8b8b8"/><circle cx="8.0" cy="3.5" r="0.75" fill="#b8b8b8"/><circle cx="11.5" cy="1" r="0.75" fill="#b8b8b8"/><circle cx="11.5" cy="3.5" r="0.75" fill="#b8b8b8"/><circle cx="15.0" cy="1" r="0.75" fill="#b8b8b8"/><circle cx="15.0" cy="3.5" r="0.75" fill="#b8b8b8"/><circle cx="18.5" cy="1" r="0.75" fill="#b8b8b8"/><circle cx="18.5" cy="3.5" r="0.75" fill="#b8b8b8"/></svg>
<svg style="left:22px;top:452px;" width="24" height="24" viewBox="0 0 24 24"><rect x="2" y="2" width="20" height="20" fill="#5b8ec7" stroke="#1a2a3a" stroke-width="0.8"/><rect x="2" y="2" width="5" height="20" fill="#1a2a3a"/><text x="10" y="17" font-size="13" font-family="Liberation Sans" fill="#fff">?</text></svg>
<svg style="left:59px;top:224px;" width="22" height="22" viewBox="0 0 24 24"><path d="M3 14l6-6 7 7-6 6z" fill="#e86a50"/><path d="M3 14l5-5 3 3-5 5z" fill="#5a96d0"/><path d="M5 10l5-5 5 5-5 5z" fill="#f0d040"/><path d="M10 15l5-5 4 4-5 5z" fill="#d8a860"/><path d="M14 10l8-8" stroke="#c89040" stroke-width="2.4"/></svg>
<svg style="left:86px;top:225px;" width="20" height="20" viewBox="0 0 24 24"><rect x="7" y="5" width="11" height="13" fill="none" stroke="#888" stroke-width="1"/><path d="M4 8v13h11" fill="none" stroke="#888" stroke-width="1"/><path d="M11 10V3a2 2 0 0 1 4 0v9" fill="none" stroke="#7a7a9a" stroke-width="1.2"/><circle cx="18" cy="19" r="4" fill="#6ac06a"/><path d="M18 16.5v5M15.5 19h5" stroke="#fff" stroke-width="1.2"/></svg>
<svg style="left:110px;top:225px;" width="20" height="20" viewBox="0 0 24 24"><path d="M1 12c5-7 14-7 19 0-5 7-14 7-19 0z" fill="#eef2f8" stroke="#aaa" stroke-width="1"/><circle cx="11" cy="11.5" r="4" fill="#6a90c0"/><circle cx="11" cy="11.5" r="1.6" fill="#111"/><path d="M17 18h6l-3 3.5z" fill="#444"/></svg>
<svg style="left:136px;top:225px;" width="20" height="20" viewBox="0 0 24 24"><path d="M3 2.5h16l-6 8v9l-4 2.5V10.5z" fill="#6a9ad0" stroke="#3a6aa0" stroke-width="0.8"/><path d="M3 2.5h16v2.5H3z" fill="#d8e060" stroke="#9aa030" stroke-width="0.6"/><path d="M16 18h6l-3 3.5z" fill="#444"/></svg>
<svg style="left:162px;top:225px;" width="20" height="20" viewBox="0 0 24 24"><text x="0" y="14" font-size="17" font-family="Liberation Serif" fill="#4a2a6a">ε</text><path d="M10 14h10v9H10z" fill="#ccc" stroke="#999" stroke-width="0.8"/><path d="M12.5 23v-5a2.5 2.5 0 0 1 5 0v5" fill="#eee" stroke="#999" stroke-width="0.8"/></svg>
<svg style="left:198px;top:225px;" width="20" height="20" viewBox="0 0 24 24"><path d="M2 3h20M4 3v16M4 8h4M4 16h4" fill="none" stroke="#999" stroke-width="0.9"/><rect x="6" y="6" width="4" height="4" fill="#f4a020" stroke="#c07010" stroke-width="0.6"/><rect x="6" y="14" width="4" height="4" fill="#f4a020" stroke="#c07010" stroke-width="0.6"/><path d="M13 2h5v11h3.5l-6 8-6-8H13z" fill="#5b8ec7" stroke="#3a6aa0" stroke-width="0.7"/></svg>
<svg style="left:223px;top:225px;" width="20" height="20" viewBox="0 0 24 24"><path d="M2 6h20M4 6v16M4 11h4M4 19h4" fill="none" stroke="#999" stroke-width="0.9"/><rect x="6" y="9" width="4" height="4" fill="#f4a020" stroke="#c07010" stroke-width="0.6"/><rect x="6" y="17" width="4" height="4" fill="#f4a020" stroke="#c07010" stroke-width="0.6"/><path d="M13 22h5V11h3.5l-6-8-6 8H13z" fill="#5b8ec7" stroke="#3a6aa0" stroke-width="0.7"/></svg>
<svg style="left:248px;top:225px;" width="20" height="20" viewBox="0 0 24 24"><rect x="2.5" y="2.5" width="15" height="15" fill="none" stroke="#777" stroke-width="1.1"/><rect x="13" y="15" width="9" height="7" rx="2" fill="#e03030"/><path d="M15 18.5h5" stroke="#fff" stroke-width="1.6"/></svg>
<svg style="left:183.0px;top:233.5px;" width="8" height="5" viewBox="0 0 8 5"><path d="M0 0H8L4.0 5Z" fill="#555"/></svg>
<svg style="left:98px;top:256px;" width="16" height="16" viewBox="0 0 24 24"><rect x="8" y="5" width="12" height="13" fill="#fff" stroke="#888" stroke-width="1.3"/><path d="M4.5 9v13h12" fill="none" stroke="#888" stroke-width="1.3"/><path d="M11.5 12V3.5a2.2 2.2 0 0 1 4.4 0V13" fill="none" stroke="#6a6a9a" stroke-width="1.4"/></svg>
<svg style="left:98px;top:639px;" width="16" height="16" viewBox="0 0 24 24"><rect x="8" y="5" width="12" height="13" fill="#fff" stroke="#888" stroke-width="1.3"/><path d="M4.5 9v13h12" fill="none" stroke="#888" stroke-width="1.3"/><path d="M11.5 12V3.5a2.2 2.2 0 0 1 4.4 0V13" fill="none" stroke="#6a6a9a" stroke-width="1.4"/></svg>
<svg style="left:1369px;top:264px;" width="24" height="24" viewBox="0 0 24 24"><path d="M3 14l6-6 7 7-6 6z" fill="#e86a50"/><path d="M3 14l5-5 3 3-5 5z" fill="#5a96d0"/><path d="M5 10l5-5 5 5-5 5z" fill="#f0d040"/><path d="M10 15l5-5 4 4-5 5z" fill="#d8a860"/><path d="M14 10l8-8" stroke="#c89040" stroke-width="2.4"/></svg>
<svg style="left:1367px;top:300px;" width="22" height="22" viewBox="0 0 24 24"><path d="M4 5h19v10H4l-3.5-5z" fill="#f6dc32" stroke="#c9a520" stroke-width="0.8"/><text x="5.5" y="13.3" font-size="8.5" font-weight="bold" font-family="Liberation Sans" fill="#333">abc</text></svg>
<svg style="left:1368px;top:333px;" width="20" height="14" viewBox="0 0 20 14"><rect x="0.5" y="0.5" width="19" height="13" rx="6" fill="#fff"/><text x="2" y="11" font-size="9.5" font-weight="bold" font-family="Liberation Sans" fill="#5e5e5e">abc</text></svg>
<svg style="left:1367px;top:361px;" width="22" height="22" viewBox="0 0 22 22"><path d="M11 1l9 5v10l-9 5-9-5V6z" fill="#e8d830"/><path d="M11 1l9 5-9 5-9-5z" fill="#e04040"/><path d="M11 11v10l9-5V6z" fill="#30b040"/></svg>
<svg style="left:1367px;top:394px;" width="22" height="22" viewBox="0 0 24 24"><circle cx="8" cy="8" r="7" fill="#d02020"/><path d="M8 8V1a7 7 0 0 0-6.8 8.7z" fill="#2a9a3a"/><path d="M8 8l6.8-1.8A7 7 0 0 0 8 1z" fill="#f0d020"/><rect x="10" y="14" width="4" height="9" fill="#f0d020"/><rect x="14" y="10" width="4" height="13" fill="#2a9a3a"/><rect x="18" y="17" width="4" height="6" fill="#a01010"/></svg>
<svg style="left:1367px;top:428px;" width="22" height="16" viewBox="0 0 22 16"><path d="M1 14l4-12 16 1-3 12z" fill="#c8c8c8"/><path d="M5 2l4 12M12 2l2 13M3 8h16" stroke="#8a8a8a" stroke-width="0.8"/></svg>
<svg style="left:1367px;top:460px;" width="22" height="22" viewBox="0 0 22 22"><rect x="8" y="1" width="8" height="6" fill="#e05050"/><path d="M12 7v4M5 11h14M5 11v3M19 11v3" stroke="#444" stroke-width="1" fill="none"/><rect x="1" y="14" width="9" height="7" fill="#f0d040"/><rect x="13" y="14" width="9" height="7" fill="#6aa0e0"/></svg>
<svg style="left:1367px;top:492px;" width="22" height="22" viewBox="0 0 22 22"><path d="M2 9c0-5 5-7 9-5l1-3 3 6-6 1 1-2c-3-1-5 1-5 3z" fill="#40a040"/><path d="M20 13c0 5-5 7-9 5l-1 3-3-6 6-1-1 2c3 1 5-1 5-3z" fill="#f07020"/></svg>
<svg style="left:18px;top:1015px;" width="6" height="16" viewBox="0 0 6 16"><rect x="0.5" y="0" width="1.2" height="1.2" fill="#c4c4c4"/><rect x="4" y="0" width="1.2" height="1.2" fill="#c4c4c4"/><rect x="0.5" y="4" width="1.2" height="1.2" fill="#c4c4c4"/><rect x="4" y="4" width="1.2" height="1.2" fill="#c4c4c4"/><rect x="0.5" y="8" width="1.2" height="1.2" fill="#c4c4c4"/><rect x="4" y="8" width="1.2" height="1.2" fill="#c4c4c4"/><rect x="0.5" y="12" width="1.2" height="1.2" fill="#c4c4c4"/><rect x="4" y="12" width="1.2" height="1.2" fill="#c4c4c4"/></svg>
<svg style="left:31px;top:1011px;" width="24" height="24" viewBox="0 0 24 24"><path d="M12 2L3 20h18z" fill="#8ab020"/><path d="M12 9l-4 8h8z" fill="#f4f4f4"/><rect x="2" y="20" width="20" height="2.5" fill="#f0a040"/></svg>
<svg style="left:65px;top:1011px;" width="24" height="24" viewBox="0 0 24 24"><rect x="1" y="2" width="19" height="19" rx="2" fill="#4a5a2a"/><text x="3" y="18" font-size="17" font-weight="bold" font-family="Liberation Serif" fill="#fff">F</text><rect x="12" y="13" width="11" height="10" rx="2" fill="#4a6a8a"/><path d="M14 16v4M14 18h6M18 16l2 2-2 2" fill="none" stroke="#fff" stroke-width="1.1"/></svg>
<svg style="left:97px;top:1011px;" width="24" height="24" viewBox="0 0 24 24"><circle cx="12" cy="10" r="9" fill="#6a96cc" stroke="#2a5a8a" stroke-width="0.8"/><path d="M4 8h16M4 12h16M12 1v18" stroke="#fff" stroke-width="0.6"/><circle cx="7" cy="19" r="3.5" fill="#000"/><circle cx="17" cy="19" r="3.5" fill="#000"/><circle cx="7" cy="19.5" r="1.8" fill="#fff"/><circle cx="17" cy="19.5" r="1.8" fill="#fff"/></svg>
<svg style="left:133px;top:1015px;" width="6" height="16" viewBox="0 0 6 16"><rect x="0.5" y="0" width="1.2" height="1.2" fill="#c4c4c4"/><rect x="4" y="0" width="1.2" height="1.2" fill="#c4c4c4"/><rect x="0.5" y="4" width="1.2" height="1.2" fill="#c4c4c4"/><rect x="4" y="4" width="1.2" height="1.2" fill="#c4c4c4"/><rect x="0.5" y="8" width="1.2" height="1.2" fill="#c4c4c4"/><rect x="4" y="8" width="1.2" height="1.2" fill="#c4c4c4"/><rect x="0.5" y="12" width="1.2" height="1.2" fill="#c4c4c4"/><rect x="4" y="12" width="1.2" height="1.2" fill="#c4c4c4"/></svg>
<svg style="left:147px;top:1011px;" width="24" height="24" viewBox="0 0 24 24"><path d="M12 2c-4 0-5 1-5 3v3h6v1H5c-2 0-3 2-3 4s1 4 3 4h2v-3c0-2 1-3 3-3h5c2 0 3-1 3-3V5c0-2-2-3-6-3z" fill="#3a76b0"/><path d="M12 22c4 0 5-1 5-3v-3h-6v-1h8c2 0 3-2 3-4s-1-4-3-4h-2v3c0 2-1 3-3 3H9c-2 0-3 1-3 3v3c0 2 2 3 6 3z" fill="#f0d040"/><path d="M15 18l4 2-4 2" fill="none" stroke="#333" stroke-width="1"/></svg>
<svg style="left:180px;top:1011px;" width="24" height="24" viewBox="0 0 24 24"><g stroke="#111" stroke-width="1"><rect x="1" y="1" width="7" height="7" fill="#5a8a9a"/><rect x="8" y="1" width="7" height="7" fill="#6a7a8a"/><rect x="15" y="1" width="7" height="7" fill="#5a4a4a"/><rect x="1" y="8" width="7" height="7" fill="#9ac0cc"/><rect x="8" y="8" width="7" height="7" fill="#a89aa0"/><rect x="15" y="8" width="7" height="7" fill="#8a4a50"/><rect x="1" y="15" width="7" height="7" fill="#d8d8d8"/><rect x="8" y="15" width="7" height="7" fill="#d8a8b0"/><rect x="15" y="15" width="7" height="7" fill="#c04a50"/></g></svg>
<svg style="left:212px;top:1011px;" width="24" height="24" viewBox="0 0 24 24"><path d="M2 2v20h20" fill="none" stroke="#777" stroke-width="1"/><path d="M3 17c5-1 7-5 10-10 2-2 4-3 8-3" fill="none" stroke="#c040c0" stroke-width="1.3"/><path d="M3 19c5-1 9-5 14-5 2 0 3 1 5 1" fill="none" stroke="#30b0c0" stroke-width="1.1"/></svg>
<svg style="left:241.5px;top:1019.5px;" width="8" height="5" viewBox="0 0 8 5"><path d="M0 0H8L4.0 5Z" fill="#444"/></svg>
<svg style="left:258px;top:1011px;" width="24" height="24" viewBox="0 0 24 24"><circle cx="9" cy="9" r="8" fill="#1a8a3a"/><text x="6.5" y="14" font-size="11" font-style="italic" font-weight="bold" font-family="Liberation Serif" fill="#fff">i</text><path d="M12 11l9 5-4 1 3 4-2 1.5-3-4-3 3z" fill="#fff" stroke="#333" stroke-width="0.8"/></svg>
<svg style="left:290px;top:1011px;" width="24" height="24" viewBox="0 0 24 24"><path d="M2 22L22 2" stroke="#1a3ad0" stroke-width="2"/><path d="M2 2v20h20" fill="none" stroke="#111" stroke-width="1.2" stroke-dasharray="1.5 1"/><path d="M2 14l6 2" stroke="#e8c830" stroke-width="1.2"/><circle cx="8" cy="16" r="1.5" fill="#333"/></svg>
<svg style="left:323px;top:1011px;" width="24" height="24" viewBox="0 0 24 24"><path d="M1 22V15c4-6 8-8 11-5s6 0 11 4v8z" fill="#20c040" stroke="#111" stroke-width="1"/><circle cx="18" cy="4" r="3" fill="#f8e040"/></svg>
<svg style="left:356px;top:1011px;" width="24" height="24" viewBox="0 0 24 24"><circle cx="12" cy="12" r="11" fill="#1a2a6a"/><circle cx="12" cy="12" r="8.5" fill="#2a5ab0"/><path d="M8 7c3 0 4 3 6 3s3 4 1 6-5 0-6-3-3-3-1-6z" fill="#5a9a4a"/></svg>
<svg style="left:389px;top:1011px;" width="24" height="24" viewBox="0 0 24 24"><rect x="0" y="1" width="24" height="22" fill="#777"/><path d="M2 18l10-14 10 14-10-3z" fill="#f0d030"/><path d="M12 4l-3 12 3-1z" fill="#c09010"/><path d="M2 18l10-3 10 3-10 3z" fill="#4a8a20"/></svg>
<svg style="left:422px;top:1011px;" width="24" height="24" viewBox="0 0 24 24"><path d="M2 13l10 6 10-6v3l-10 6-10-6z" fill="#3a4a4a"/><path d="M2 10l10-6 10 6-10 6z" fill="#6a9ac0"/><path d="M11 6c4-3 9-3 10 1s-3 7-7 7-5-4-3-8z" fill="#a8d860"/></svg>
<svg style="left:457px;top:1015px;" width="6" height="16" viewBox="0 0 6 16"><rect x="0.5" y="0" width="1.2" height="1.2" fill="#c4c4c4"/><rect x="4" y="0" width="1.2" height="1.2" fill="#c4c4c4"/><rect x="0.5" y="4" width="1.2" height="1.2" fill="#c4c4c4"/><rect x="4" y="4" width="1.2" height="1.2" fill="#c4c4c4"/><rect x="0.5" y="8" width="1.2" height="1.2" fill="#c4c4c4"/><rect x="4" y="8" width="1.2" height="1.2" fill="#c4c4c4"/><rect x="0.5" y="12" width="1.2" height="1.2" fill="#c4c4c4"/><rect x="4" y="12" width="1.2" height="1.2" fill="#c4c4c4"/></svg>
<svg style="left:472px;top:1011px;" width="24" height="24" viewBox="0 0 24 24"><path d="M2 2h7M2 2v6" stroke="#c0e8f0" stroke-width="1"/><path d="M5 5h9M5 5v11" stroke="#20c0d0" stroke-width="1.2"/><rect x="8" y="9" width="14" height="14" fill="none" stroke="#1a3a5a" stroke-width="1.3"/><circle cx="15" cy="15.5" r="4.5" fill="none" stroke="#20a0c0" stroke-width="1.3"/></svg>
<svg style="left:507px;top:1015px;" width="6" height="16" viewBox="0 0 6 16"><rect x="0.5" y="0" width="1.2" height="1.2" fill="#c4c4c4"/><rect x="4" y="0" width="1.2" height="1.2" fill="#c4c4c4"/><rect x="0.5" y="4" width="1.2" height="1.2" fill="#c4c4c4"/><rect x="4" y="4" width="1.2" height="1.2" fill="#c4c4c4"/><rect x="0.5" y="8" width="1.2" height="1.2" fill="#c4c4c4"/><rect x="4" y="8" width="1.2" height="1.2" fill="#c4c4c4"/><rect x="0.5" y="12" width="1.2" height="1.2" fill="#c4c4c4"/><rect x="4" y="12" width="1.2" height="1.2" fill="#c4c4c4"/></svg>
<svg style="left:520px;top:1011px;" width="24" height="24" viewBox="0 0 24 24"><rect x="2" y="4" width="18" height="14" fill="#dce8e0" stroke="#444" stroke-width="1"/><path d="M2 8h18M2 12h18M6 4v14M10 4v14M14 4v14" stroke="#9ab" stroke-width="0.5"/><rect x="13" y="13" width="11" height="11" rx="2" fill="#4e9a4e" stroke="#2f6f2f" stroke-width="0.6"/><path d="M18.5 15.2V21.8M15.2 18.5H21.8" stroke="#fff" stroke-width="2.2"/></svg>
<svg style="left:556px;top:1015px;" width="6" height="16" viewBox="0 0 6 16"><rect x="0.5" y="0" width="1.2" height="1.2" fill="#c4c4c4"/><rect x="4" y="0" width="1.2" height="1.2" fill="#c4c4c4"/><rect x="0.5" y="4" width="1.2" height="1.2" fill="#c4c4c4"/><rect x="4" y="4" width="1.2" height="1.2" fill="#c4c4c4"/><rect x="0.5" y="8" width="1.2" height="1.2" fill="#c4c4c4"/><rect x="4" y="8" width="1.2" height="1.2" fill="#c4c4c4"/><rect x="0.5" y="12" width="1.2" height="1.2" fill="#c4c4c4"/><rect x="4" y="12" width="1.2" height="1.2" fill="#c4c4c4"/></svg>
<svg style="left:573px;top:1015px;" width="6" height="16" viewBox="0 0 6 16"><rect x="0.5" y="0" width="1.2" height="1.2" fill="#c4c4c4"/><rect x="4" y="0" width="1.2" height="1.2" fill="#c4c4c4"/><rect x="0.5" y="4" width="1.2" height="1.2" fill="#c4c4c4"/><rect x="4" y="4" width="1.2" height="1.2" fill="#c4c4c4"/><rect x="0.5" y="8" width="1.2" height="1.2" fill="#c4c4c4"/><rect x="4" y="8" width="1.2" height="1.2" fill="#c4c4c4"/><rect x="0.5" y="12" width="1.2" height="1.2" fill="#c4c4c4"/><rect x="4" y="12" width="1.2" height="1.2" fill="#c4c4c4"/></svg>
<svg style="left:587px;top:1011px;" width="24" height="24" viewBox="0 0 24 24"><circle cx="12" cy="12" r="11" fill="#3ab83a"/><circle cx="16" cy="7" r="2.5" fill="#fff"/><circle cx="7" cy="12" r="2.5" fill="#fff"/><circle cx="16" cy="17" r="2.5" fill="#fff"/><path d="M16 7l-9 5 9 5" fill="none" stroke="#fff" stroke-width="1.6"/></svg>
<svg style="left:1630px;top:1015px;" width="6" height="16" viewBox="0 0 6 16"><rect x="0.5" y="0" width="1.2" height="1.2" fill="#c4c4c4"/><rect x="4" y="0" width="1.2" height="1.2" fill="#c4c4c4"/><rect x="0.5" y="4" width="1.2" height="1.2" fill="#c4c4c4"/><rect x="4" y="4" width="1.2" height="1.2" fill="#c4c4c4"/><rect x="0.5" y="8" width="1.2" height="1.2" fill="#c4c4c4"/><rect x="4" y="8" width="1.2" height="1.2" fill="#c4c4c4"/><rect x="0.5" y="12" width="1.2" height="1.2" fill="#c4c4c4"/><rect x="4" y="12" width="1.2" height="1.2" fill="#c4c4c4"/></svg>
<svg style="left:1643px;top:1011px;" width="24" height="24" viewBox="0 0 24 24"><circle cx="12" cy="12" r="10.5" fill="#1a2a6a"/><path d="M12 1.5a10.5 10.5 0 0 1 0 21z" fill="#d02020"/><path d="M4 6l8 6-8 6" fill="#fff"/><circle cx="7" cy="12" r="2" fill="#f0d020"/></svg>
<svg style="left:1679px;top:1015px;" width="6" height="16" viewBox="0 0 6 16"><rect x="0.5" y="0" width="1.2" height="1.2" fill="#c4c4c4"/><rect x="4" y="0" width="1.2" height="1.2" fill="#c4c4c4"/><rect x="0.5" y="4" width="1.2" height="1.2" fill="#c4c4c4"/><rect x="4" y="4" width="1.2" height="1.2" fill="#c4c4c4"/><rect x="0.5" y="8" width="1.2" height="1.2" fill="#c4c4c4"/><rect x="4" y="8" width="1.2" height="1.2" fill="#c4c4c4"/><rect x="0.5" y="12" width="1.2" height="1.2" fill="#c4c4c4"/><rect x="4" y="12" width="1.2" height="1.2" fill="#c4c4c4"/></svg>
<svg style="left:1692px;top:1011px;" width="24" height="24" viewBox="0 0 24 24"><circle cx="11" cy="13" r="10" fill="#5a86c8"/><path d="M5 9c3 0 4 3 7 2s2 5-1 6-4-2-6-3z" fill="#c8d8f0"/><path d="M18 1c2 2 4 4 3 7" stroke="#9ac0e8" stroke-width="2" fill="none"/></svg>
<svg style="left:0;top:0" width="1936" height="1097" viewBox="0 0 1936 1097"><polygon points="822,370 829,363.6 864,364 871,365 874,370 879,371 879,364 902,363 933.4,364 933.4,375.5 936,376.8 939.8,375.5 940.4,371.7 952,371.7 956.4,368.5 964.7,372.3 968.5,366.6 975.5,364 976.2,351.2 986.4,348 995.3,338.5 1003.6,325 1004.9,307.2 1008,298.3 1020.8,299 1023.4,297.6 1027.2,299.6 1035.5,295.7 1044.4,287.4 1054,283.6 1063,282 1063,271.6 1071,271 1082,282 1100,278 1104,270 1116,258 1120,248 1122,243 1136,239 1147,229 1158,231 1160,235 1163,230 1177,223 1187,227 1196,222 1199,227 1194,236 1193,240 1181,242 1176,250 1172,253 1171,259 1167,264 1161,267 1160.6,272 1163,274 1163,280 1165,284 1160,292 1154,295 1154,301 1147,302 1147,308 1144.4,314 1145.4,320 1142,328 1134,335 1134,342 1132,348 1133.6,358 1132,368 1132.4,375 1137,376 1149,382 1148,393 1144,394 1134,403 1132.4,414 1134,416 1140,426 1146,433 1149,428 1155,424 1166,428 1177,422 1184,433 1183,442 1172,445 1164,449 1160,457 1160,463 1158,469 1159,486 1156,502 1152,505 1149,498 1144,491 1138,487 1132,487 1125,498 1126,512 1130,518 1139,528 1140,534 1138,544 1134,545.5 1119,545.5 1112,572 1105.6,583 1107.5,593 1108,596.5 1104,606.5 1098,617.5 1091,629 1080,636 1068,652 1056,662 1054,670 1051,679 1041,666 1020,685 1017,694 1015,710 1010,726 1002,723 1000,730 1003,738 1009,744 1009,756 995,762 989,770 989,776 978,784 969,795 968.6,800 969.5,814.6 966.7,820 958.5,825.5 960.4,839 965.8,853 962.2,859 975,866.5 973,878 980.4,891 1011.4,915 1013,924 1019.6,934 1018.7,940 1011.4,942 1002.3,929.4 995,925 988.6,927.6 987.7,946 986.8,970.4 989.5,977.7 979.5,979.5 978.6,970.4 951.2,965 938.5,966 931.2,970.4 891,979.5 899.3,944 898.4,927.6 887.4,911 869.2,918.5 862.8,899.3 847.3,901 832.8,899.3 820,904.8 812,909 810,902 796,896 786,884 780,883 770,886 763,883 756,881 748,900 743,918 740,923 668,866 627,834 626,830 640,784 632,776 633,768 640,754 643,743 650,736 651,724 658,712 662,708 666,694 665,687 667,688 668,675 679,664 687,648 692,649 694,640 712,626 716,627 718,620 730,609 740,593 756,584 756,574 760,568 764,560 760,550 752,542 746,536 739,530 738,514 742,503 735,502 733,495 726,492 724,488 727,478 723,466 727,455 739,453 744,448 744,442 749,433 760,434 768,429 764,424 763,418 776,417 782,419 782,414 777,410 780,408 779,403 780,399 790,400 794,403 798,394 804,388 818,387.6 819,383 824,381 824,372" fill="#e7e7e7"/><polyline points="1132,416 1130,422 1114,429 1110,438 1112,446 1104,448 1084,440 1072,446 1062,453 1064,462 1054,472 1044,476 1026,476 1022,484 1012,488 1000,492 993,495.7 987.4,516.8 972,518 960.6,521.6 955,528 940.5,562.4" fill="none" stroke="#fff" stroke-width="1.05" stroke-linejoin="round"/><polyline points="897.4,511 895.5,553 905,554 906,562 932,562 934,560.4 940.5,562.4 940.5,622 936.7,651 938.6,660 943.4,674 928,685 857,686 856,691 865,697.7 858.3,707.4" fill="none" stroke="#fff" stroke-width="1.05" stroke-linejoin="round"/><polyline points="836,645 836.4,671.9 838.2,674.6 841.9,677.3 844.6,683.7 842.3,689.2 846.4,691 848.3,695.5 851.9,701 857.4,703.8 858.3,707.4 868.3,715.6 872,718.3 872,722 868.3,722.9 863.8,719.3 858.3,717.4 851,720.2 848.7,725.6 850,735.7 820,754.8 730,809 668,866" fill="none" stroke="#fff" stroke-width="1.05" stroke-linejoin="round"/><polyline points="800,630 786,638 778,636 768,636 760,644 756,652 742,654 730,666 732,671 726,680 724,696 727,704 725,710 720,724 730,735" fill="none" stroke="#fff" stroke-width="1.05" stroke-linejoin="round"/><polyline points="725,740 716,736 714,738 712,753 708,756 698,753 690,754 694,748 690,739 685,739 679,726 680,720 677,712 680,704 664,704" fill="none" stroke="#fff" stroke-width="1.05" stroke-linejoin="round"/><polyline points="764,560 776,562 784,566 790,570 794,564 807,560 808,553 818,557 829,552 833,549 836,556 849,556 851,545 842,535 848,532 857,533 854,523 865,521 868,516 892,514 897.4,511" fill="none" stroke="#fff" stroke-width="1.05" stroke-linejoin="round"/><polyline points="940.5,622 960.6,622 960.6,631.7 975,632.6 975,651 995,625 1006,627 1013,639 1044,642 1045,651 1053,653 1055,661 1056,662" fill="none" stroke="#fff" stroke-width="1.05" stroke-linejoin="round"/><polyline points="928,685 956.8,682.4 966,698 958,706 958,724 966,725 966,738 916,788 907,793 880,803 840,815" fill="none" stroke="#fff" stroke-width="1.05" stroke-linejoin="round"/><polyline points="840,815 888.4,911" fill="none" stroke="#fff" stroke-width="1.05" stroke-linejoin="round"/><circle cx="951.5" cy="420.2" r="9.5" fill="#c33c38"/><circle cx="1052.7" cy="542.7" r="63.7" fill="#c33c38"/><circle cx="821.5" cy="625.5" r="36.5" fill="#c33c38"/><circle cx="739.7" cy="743.8" r="22.7" fill="#c33c38"/><circle cx="827.3" cy="807.7" r="22.7" fill="#c33c38"/><circle cx="949.2" cy="812.6" r="9.1" fill="#c33c38"/></svg>
</body></html>
